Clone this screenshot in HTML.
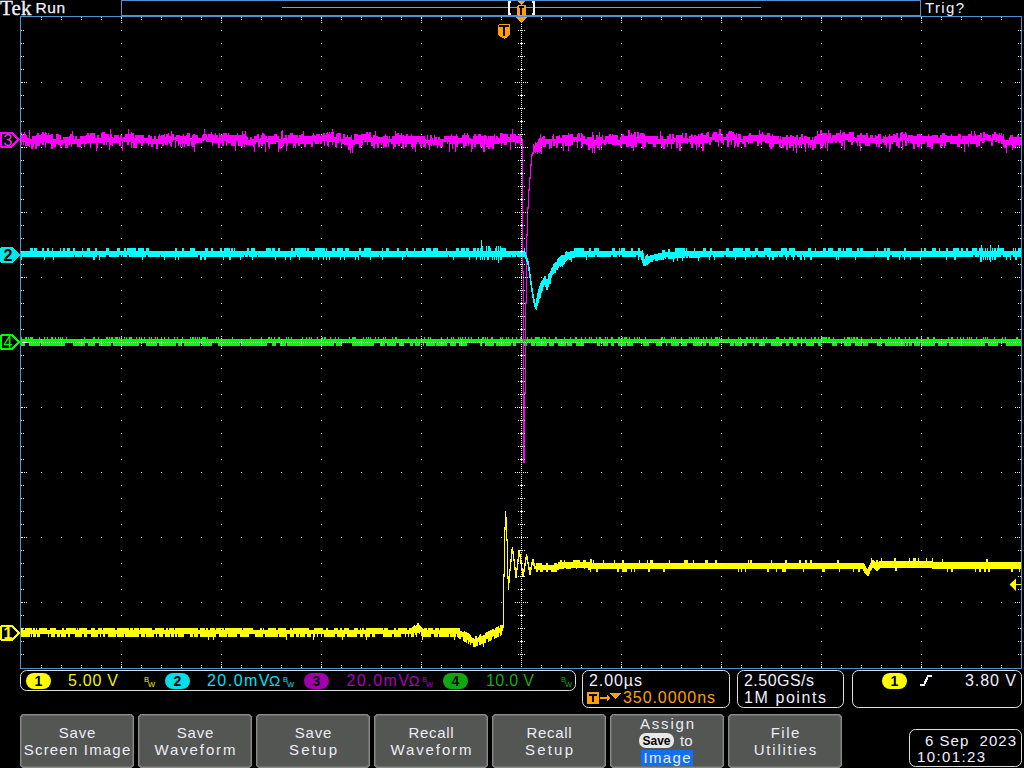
<!DOCTYPE html>
<html><head><meta charset="utf-8"><title>Tek scope</title>
<style>html,body{margin:0;padding:0;background:#000;width:1024px;height:768px;overflow:hidden}svg{display:block}</style>
</head><body>
<svg width="1024" height="768" viewBox="0 0 1024 768" shape-rendering="crispEdges">
<rect width="1024" height="768" fill="#000"/>
<path fill="#00ff00" d="M21 337H22V339H25V337H27V339H28V337H29V339H30V337H33V339H39V337H40V339H44V337H45V339H47V337H48V339H51V337H53V339H55V337H56V339H58V337H59V339H60V337H61V339H62V337H63V339H66V337H67V339H84V337H85V339H93V337H95V339H98V337H99V339H106V337H108V339H109V337H110V339H111V337H113V339H115V337H118V339H119V337H120V339H121V337H122V339H124V337H125V339H126V337H127V339H129V337H132V339H136V337H137V339H139V337H140V339H141V337H142V339H144V337H145V339H149V337H150V339H151V337H152V339H155V337H156V339H157V337H158V339H161V337H162V339H164V337H165V339H168V337H169V339H174V337H175V339H177V337H178V339H182V337H183V339H190V337H191V339H192V337H194V339H195V337H196V339H197V337H198V339H199V337H200V339H202V337H206V339H207V337H208V339H216V337H217V339H218V337H219V339H232V337H233V339H250V337H251V339H261V337H262V339H268V337H270V339H271V337H272V339H274V337H275V339H278V337H280V339H286V337H287V339H288V337H289V339H291V337H292V339H302V337H303V339H306V337H307V339H309V337H310V339H311V337H312V339H317V337H318V339H322V337H323V339H324V337H326V339H330V337H331V339H335V337H336V339H338V337H339V339H349V337H350V339H352V337H356V339H363V337H364V339H366V337H367V339H368V337H369V339H370V337H371V339H375V337H376V339H378V337H379V339H383V337H384V339H385V337H386V339H392V337H393V339H395V337H397V339H408V337H409V339H416V337H417V339H424V337H425V339H428V337H429V339H430V337H431V339H441V337H442V339H447V337H448V339H451V337H452V339H453V337H454V339H458V337H459V339H460V337H461V339H462V337H463V339H465V337H466V339H468V337H469V339H471V337H472V339H478V337H479V339H482V337H484V339H485V337H486V339H487V337H488V339H491V337H493V339H500V337H501V339H502V337H503V339H506V337H507V339H508V337H509V339H512V337H513V339H516V337H517V339H520V337H522V339H523V337H524V339H527V337H528V339H531V337H532V339H535V337H540V339H542V337H543V339H544V337H546V339H549V337H550V339H555V337H557V339H564V337H565V339H570V337H571V339H575V337H577V339H581V337H582V339H585V337H586V339H589V337H590V339H591V337H592V339H596V337H597V339H599V337H601V339H605V337H606V339H607V337H608V339H611V337H613V339H618V337H620V339H622V337H623V339H624V337H627V339H629V337H630V339H634V337H635V339H637V337H638V339H639V337H640V339H645V337H646V339H661V337H663V339H664V337H665V339H671V337H672V339H673V337H674V339H675V337H676V339H681V337H682V339H689V337H690V339H691V337H692V339H694V337H695V339H696V337H697V339H698V337H699V339H703V337H704V339H706V337H707V339H711V337H712V339H715V337H718V339H719V337H720V339H728V337H729V339H738V337H739V339H740V337H741V339H746V337H748V339H750V337H751V339H753V337H754V339H756V337H757V339H763V337H764V339H766V337H767V339H776V337H779V339H784V337H785V339H789V337H791V339H792V337H793V339H797V337H799V339H801V337H802V339H805V337H806V339H811V337H812V339H814V337H816V339H818V337H819V339H821V337H827V339H828V337H830V339H833V337H834V339H844V337H845V339H847V337H850V339H851V337H852V339H853V337H855V339H856V337H858V339H861V337H862V339H871V337H872V339H880V337H881V339H888V337H889V339H890V337H891V339H895V337H896V339H898V337H900V339H905V337H906V339H909V337H910V339H916V337H918V339H921V337H922V339H927V337H929V339H933V337H935V339H948V337H949V339H951V337H953V339H957V337H958V339H960V337H961V339H963V337H964V339H967V337H968V339H969V337H970V339H971V337H972V339H976V337H977V339H983V337H984V339H985V337H986V339H987V337H988V339H994V337H995V339H1002V337H1003V339H1005V337H1006V339H1016V337H1018V339H1021V346H1006V343H998V346H988V343H985V346H949V343H947V346H938V343H935V346H921V343H920V346H914V343H912V346H909V343H908V346H906V343H905V346H885V343H881V346H877V343H868V346H863V343H862V346H855V343H851V346H844V343H837V346H832V343H821V346H818V343H814V346H806V343H802V346H801V343H797V346H793V343H789V346H786V343H782V346H771V343H765V346H759V343H755V346H753V343H747V346H744V343H742V346H735V343H734V346H730V343H719V346H709V343H706V346H703V343H702V346H693V343H687V346H682V343H679V346H671V343H667V346H666V343H662V346H656V343H649V346H643V343H633V346H627V343H626V346H618V343H614V346H611V343H608V346H603V343H600V346H597V343H584V346H576V343H572V346H567V343H566V346H558V343H554V346H549V343H547V346H536V343H535V346H531V343H527V346H524V343H516V346H513V343H511V346H496V343H494V346H485V343H482V346H480V343H467V346H459V343H456V346H450V343H447V346H436V343H435V346H426V343H424V346H423V343H420V346H415V343H413V346H410V343H404V346H399V343H396V346H387V343H385V346H380V343H374V346H352V343H342V346H336V343H334V346H287V343H286V346H280V343H276V346H272V343H267V346H241V343H240V346H218V343H212V346H202V343H200V346H184V343H182V346H178V343H176V346H159V343H157V346H146V343H139V346H113V343H111V346H99V343H95V346H88V343H85V346H73V343H65V346H41V343H40V346H29V343H25V346H21z"/>
<path fill="#ff00ff" d="M21 132H22V134H24V132H25V134H26V135H27V138H29V130H30V139H32V136H36V135H37V133H39V135H41V134H42V132H44V134H45V132H46V133H47V135H48V133H49V135H51V134H53V139H56V134H59V135H61V140H63V137H69V136H70V134H72V131H73V136H74V139H75V136H77V139H80V136H86V135H87V133H89V135H90V133H95V138H97V135H99V138H101V133H102V132H105V134H109V137H110V129H111V134H112V137H113V138H114V135H119V138H120V135H122V138H123V137H125V134H128V129H129V134H131V132H132V133H134V138H135V135H144V138H148V135H150V136H152V139H154V136H156V139H158V136H159V134H160V136H161V135H164V134H165V137H166V134H168V133H169V136H171V131H172V134H174V137H176V135H180V136H183V134H184V136H186V135H187V133H190V138H192V135H193V134H195V135H198V138H202V135H203V134H204V129H205V134H207V137H208V134H211V132H212V134H213V135H215V133H216V135H218V138H219V133H220V135H223V133H227V135H228V133H229V135H237V133H238V135H242V131H243V134H245V131H246V136H247V137H248V140H250V137H252V139H254V136H257V134H259V139H260V138H261V135H262V133H264V134H265V136H267V139H268V136H274V134H277V136H279V139H281V131H282V130H283V138H285V135H287V138H288V135H290V133H293V135H298V138H299V135H301V134H303V131H304V136H312V135H313V133H314V135H315V136H316V134H320V136H321V135H323V133H325V135H326V133H327V132H328V134H329V132H330V134H331V132H332V129H333V132H334V137H336V134H337V133H341V139H343V134H345V137H347V135H348V137H351V135H352V140H354V134H358V135H361V134H366V132H368V134H369V132H371V137H372V138H373V135H375V131H376V136H378V137H383V136H385V134H386V136H388V139H389V136H390V139H392V136H395V131H396V134H397V133H399V135H401V133H402V135H404V136H406V134H408V136H411V134H412V136H425V139H426V140H427V135H428V140H430V135H432V138H433V140H434V135H435V137H437V140H438V137H440V139H444V136H451V134H452V136H456V134H457V136H458V138H462V135H464V133H465V135H467V133H468V135H469V138H471V139H473V136H474V134H476V136H478V134H481V136H484V135H486V136H487V139H488V136H494V134H495V139H496V136H498V138H500V133H503V134H508V137H510V134H512V129H513V134H516V136H519V134H521V139H523V271H524V392H525V302H526V234H527V207H528V189H529V177H530V164H531V154H532V152H533V144H534V145H535V142H536V143H537V142H538V139H539V138H540V134H541V138H542V137H543V136H545V139H552V136H553V134H554V139H556V136H559V135H560V138H562V135H568V133H569V135H570V134H573V137H577V134H578V133H580V138H581V133H582V134H583V136H585V139H587V137H592V132H593V135H594V140H596V135H598V137H599V132H600V137H602V135H603V140H605V136H609V134H611V136H612V134H613V135H618V140H620V137H621V134H624V136H628V130H630V135H631V133H632V135H633V134H634V132H636V137H637V132H639V135H640V133H644V134H645V136H658V139H660V131H661V136H663V139H667V136H669V134H671V139H672V134H674V138H676V135H682V133H683V138H685V133H687V138H688V139H689V136H691V134H692V135H693V137H694V135H696V136H698V134H699V136H700V134H701V133H703V135H706V133H707V132H709V137H712V134H713V132H717V134H719V129H721V135H722V134H723V137H726V134H728V132H729V131H732V132H734V134H735V135H736V133H737V138H738V134H741V139H743V136H748V135H749V133H751V135H759V130H760V134H762V132H763V134H764V135H767V133H770V136H772V134H773V136H779V139H780V136H781V140H782V137H786V135H788V137H790V135H792V136H794V137H796V135H798V140H799V137H801V134H803V139H804V136H807V137H810V140H812V137H813V140H814V137H815V136H817V131H818V134H820V130H822V133H827V135H828V130H829V133H831V138H832V135H836V133H840V130H841V135H842V133H843V132H845V134H849V132H854V137H855V138H857V135H860V133H862V135H866V133H868V138H870V135H873V138H875V135H876V136H878V134H881V139H883V136H884V137H885V135H886V137H888V136H889V134H890V136H893V134H895V135H896V133H898V138H900V133H901V132H903V134H905V132H906V133H907V138H908V135H913V136H917V134H922V136H928V134H929V136H932V135H938V138H940V135H942V133H945V135H947V136H951V134H952V136H958V134H961V139H962V136H968V134H971V131H972V136H974V131H975V134H976V136H977V135H980V133H982V138H983V132H985V134H988V135H991V138H992V134H994V132H996V134H998V135H999V133H1000V135H1001V133H1002V136H1003V134H1004V139H1005V140H1009V137H1010V135H1013V137H1017V135H1019V137H1021V145H1020V148H1019V145H1016V148H1013V150H1012V145H1007V153H1006V148H1004V147H1003V144H1001V141H1000V143H998V141H997V142H995V140H993V146H991V141H987V140H985V142H984V143H982V141H980V146H978V147H976V144H970V142H969V147H968V144H965V152H964V144H960V147H957V144H950V142H946V146H945V148H944V143H943V146H942V148H940V143H933V149H931V147H927V142H925V144H922V149H921V144H920V147H917V144H915V149H913V144H912V143H910V141H909V143H908V141H907V146H905V140H903V150H902V141H900V148H898V146H896V142H893V144H891V149H890V152H889V143H887V148H886V145H884V143H883V142H882V144H880V147H878V144H877V147H876V144H875V143H870V146H865V143H861V151H860V146H859V141H858V146H857V143H856V141H854V142H853V145H851V142H848V140H845V150H844V141H843V146H841V143H839V141H837V143H835V141H833V143H828V151H827V141H826V148H825V143H824V146H823V148H821V149H820V144H816V148H814V150H812V145H811V148H810V145H809V148H808V143H806V152H805V147H804V144H802V148H801V145H800V148H799V145H797V153H796V148H795V144H794V151H793V146H791V148H789V143H788V150H786V145H784V148H782V143H781V148H780V147H779V144H774V147H772V149H770V147H769V143H765V141H763V142H762V145H761V143H759V146H757V141H753V143H749V144H748V142H746V147H744V144H742V142H740V144H739V147H737V143H736V146H735V148H734V140H732V145H731V141H730V142H729V147H727V140H724V145H723V143H721V141H720V140H719V147H718V142H715V140H712V142H711V145H709V142H708V143H704V151H702V144H700V147H698V144H697V150H696V145H695V143H693V148H691V144H690V142H688V144H687V143H681V151H679V143H678V148H676V141H675V142H674V144H672V149H671V144H668V147H667V144H665V149H663V147H661V144H656V147H653V144H648V142H646V147H644V149H643V148H642V143H638V142H637V147H635V145H634V151H633V148H631V146H629V147H626V144H622V148H620V145H612V144H608V142H607V144H606V145H604V143H602V150H601V145H600V150H599V148H597V145H595V153H594V148H593V153H592V148H590V150H588V145H586V144H583V147H581V141H578V148H577V142H576V140H575V142H573V145H571V146H569V151H568V146H565V143H564V151H563V146H562V143H558V148H556V143H555V146H553V141H552V148H550V149H549V144H546V147H543V145H542V154H541V152H540V153H539V152H538V154H537V152H536V153H535V152H534V154H533V156H532V166H531V179H530V191H529V209H528V236H527V304H526V394H525V463H523V273H522V142H521V146H520V143H516V146H515V142H511V150H510V142H507V145H504V143H502V146H501V143H499V144H494V149H492V147H490V149H488V147H486V144H485V152H483V147H480V144H476V147H474V144H473V149H472V152H471V144H470V143H469V146H468V143H467V146H465V148H463V143H459V144H458V147H456V152H455V144H453V149H452V144H450V152H449V142H448V144H447V142H443V147H441V148H440V145H438V148H437V145H434V146H433V144H432V146H431V145H430V150H429V145H428V143H426V148H425V147H423V144H422V147H420V144H419V142H417V144H416V152H415V147H413V149H412V147H411V144H407V147H405V144H404V149H403V148H402V143H400V146H398V144H396V147H394V149H393V144H391V142H389V147H388V144H387V147H384V148H383V143H382V145H381V143H379V148H377V144H375V149H374V148H373V146H371V142H368V145H367V142H364V140H363V145H362V146H361V148H359V144H355V145H353V153H352V148H351V153H350V150H348V145H344V144H342V147H341V142H340V141H339V143H337V148H336V147H335V142H333V145H332V142H329V147H328V146H327V141H325V146H324V141H322V144H320V142H319V144H315V142H314V141H313V147H311V144H306V147H304V144H300V146H298V143H296V148H295V146H294V148H293V143H288V146H287V151H286V143H284V146H283V147H281V149H279V152H278V142H276V144H270V149H269V147H268V142H266V152H265V144H263V146H261V144H260V147H258V142H256V144H255V152H254V147H253V145H246V144H245V147H244V144H243V147H241V146H238V141H236V151H235V146H231V143H227V146H226V141H224V146H222V143H220V148H218V143H213V146H212V142H206V140H204V141H202V143H196V144H195V152H194V147H192V146H191V141H190V146H187V144H185V147H184V144H183V147H182V144H181V147H180V144H179V146H178V141H176V148H175V140H173V142H172V147H171V146H170V144H169V142H168V145H165V143H164V146H162V144H158V149H156V144H153V147H151V144H149V146H148V143H146V141H145V143H143V146H141V143H137V148H133V143H132V148H131V142H129V145H127V142H124V141H123V151H122V141H121V146H119V143H113V146H112V145H110V150H109V142H107V145H106V142H105V145H103V143H98V148H97V151H96V143H91V148H90V143H87V144H85V147H84V144H81V147H77V144H72V147H71V144H70V145H68V148H65V143H63V145H61V148H60V145H58V144H56V147H53V149H51V144H50V143H46V148H45V142H44V145H42V143H40V146H37V149H35V144H34V147H33V149H31V144H30V147H29V146H25V142H24V145H23V142H22V145H21z"/>
<path fill="#00ffff" d="M21 251H30V248H33V251H34V248H37V251H42V248H44V251H47V248H49V251H52V248H53V251H60V248H61V251H63V248H65V251H67V248H70V251H73V248H75V251H82V248H83V251H87V248H90V251H95V248H97V251H106V248H109V251H117V248H120V251H124V248H126V251H127V248H136V251H138V248H144V251H146V248H149V251H175V248H177V251H182V248H184V251H190V248H195V251H205V248H208V251H211V248H213V251H220V248H222V251H224V248H230V251H231V248H233V251H234V248H235V251H247V248H249V251H251V248H255V251H266V248H271V251H272V248H275V251H278V248H280V251H291V248H293V251H295V248H306V251H307V248H309V251H315V248H325V251H326V248H327V251H332V248H335V251H337V248H343V251H345V248H349V251H359V248H361V251H364V248H371V251H382V248H383V251H386V248H389V251H397V248H399V251H406V248H408V251H414V248H415V251H422V248H424V251H426V248H431V251H433V248H438V251H446V248H447V251H456V248H459V251H461V248H465V251H466V248H469V251H473V248H476V251H477V248H479V251H480V248H481V240H482V246H483V251H486V246H487V251H488V246H490V248H491V251H495V248H496V246H497V251H498V246H499V251H500V246H501V248H506V251H524V248H525V252H526V255H527V258H528V261H529V267H530V274H531V281H532V288H533V294H534V299H535V303H536V298H537V293H538V289H539V286H540V283H541V281H542V280H543V278H544V276H546V279H548V274H549V273H550V271H551V268H552V267H553V264H554V263H555V262H557V259H558V258H559V257H560V256H561V255H565V252H566V251H567V252H570V251H574V248H584V251H589V248H591V251H594V248H599V251H612V248H615V251H619V248H620V251H621V248H625V251H631V248H633V251H638V248H640V251H642V250H643V253H644V259H645V256H646V255H647V254H648V256H650V255H654V254H658V253H662V250H665V252H668V249H670V252H675V248H685V251H686V248H687V251H694V248H695V251H703V248H706V251H710V248H712V251H726V248H729V251H733V248H743V251H745V248H750V251H755V248H758V251H764V248H771V251H781V248H787V251H789V248H795V251H808V248H811V251H815V248H816V251H823V248H826V251H828V248H833V251H838V248H841V251H843V248H844V251H846V248H852V251H857V248H859V251H860V248H863V251H877V248H878V251H884V248H886V251H887V248H890V251H904V248H906V251H921V248H922V251H924V248H926V251H932V248H936V251H939V248H940V251H946V248H948V251H953V248H959V251H961V248H963V251H966V248H968V251H972V248H977V251H979V248H981V245H982V248H983V251H985V248H986V251H987V248H988V251H990V245H991V251H992V248H993V251H994V248H996V251H997V248H998V245H999V248H1004V251H1013V248H1014V251H1015V248H1016V251H1018V248H1021V257H1017V260H1015V257H1013V255H1011V260H1010V257H1007V260H1006V257H1003V255H1001V257H996V260H994V257H993V260H992V257H991V262H990V260H989V257H988V260H987V257H986V260H985V257H984V260H983V257H982V262H980V255H979V257H975V255H973V257H956V260H954V257H947V260H946V257H921V260H920V257H911V260H910V257H905V260H904V257H902V255H901V257H900V260H899V257H892V255H890V257H889V260H887V257H875V255H874V257H856V260H855V257H839V260H838V257H837V260H836V257H812V260H810V257H805V260H804V257H803V255H802V260H800V257H797V255H795V257H794V260H793V257H791V255H789V257H787V260H786V257H785V255H783V257H779V255H778V257H774V260H772V257H770V260H769V257H767V255H765V257H758V255H756V257H752V255H751V257H746V260H745V257H736V260H735V257H726V255H724V257H715V260H714V257H713V255H711V257H710V260H709V257H700V258H699V261H698V258H689V256H688V258H686V256H685V258H683V261H682V258H678V261H677V258H675V259H674V262H673V259H668V257H666V259H665V258H664V260H658V261H655V259H654V260H653V262H650V263H649V264H648V265H646V266H643V263H642V260H641V257H639V260H638V255H636V257H622V255H620V257H619V255H617V257H613V255H611V257H597V255H595V257H588V255H587V260H586V257H575V258H572V262H571V260H569V259H568V260H567V261H566V262H565V264H564V265H563V267H562V266H561V267H560V266H559V268H558V270H556V273H554V274H553V275H552V278H551V284H549V287H548V290H546V287H545V285H544V287H543V291H542V293H541V298H540V299H539V303H538V306H537V310H536V309H535V307H534V303H533V298H532V292H531V285H530V278H529V271H528V265H527V262H526V259H525V257H517V255H516V257H512V255H511V257H502V260H500V257H499V263H498V257H497V260H496V257H495V260H494V257H493V260H492V257H489V260H487V257H485V260H484V257H483V260H482V257H481V260H480V257H477V260H476V257H470V260H469V257H454V260H453V257H449V255H448V257H407V255H406V257H403V260H402V257H383V260H382V257H380V255H379V257H371V260H370V257H361V255H359V260H358V257H356V260H355V257H345V260H344V257H341V260H340V257H330V260H329V257H327V260H326V257H324V260H323V257H319V260H318V257H313V260H312V257H300V260H299V257H297V255H296V257H291V260H290V257H286V260H285V257H276V260H275V257H258V255H257V257H253V260H252V257H249V255H248V257H245V255H244V257H241V260H240V257H231V260H229V257H224V260H223V257H206V260H204V257H202V260H200V255H198V257H179V260H178V257H176V260H175V257H165V260H164V257H161V255H160V257H148V255H146V257H143V260H142V257H129V255H127V257H123V255H122V257H121V255H119V257H109V255H106V257H100V260H99V255H97V257H95V260H93V257H83V255H82V257H75V255H74V257H54V260H53V257H45V260H44V257H22V260H21z"/>
<path fill="#ffff00" d="M21 628H23V630H25V628H32V630H33V628H35V630H36V628H37V630H39V628H47V630H50V628H56V630H62V628H64V630H66V628H76V630H77V628H78V630H79V628H87V630H91V628H95V630H98V628H102V630H103V628H115V630H117V628H129V630H130V628H133V630H134V628H139V630H140V628H152V630H155V628H164V630H166V628H168V630H169V628H174V630H175V628H198V630H200V628H205V630H206V628H208V630H210V628H215V630H216V628H221V630H222V628H224V630H225V628H242V630H243V628H253V630H260V628H262V630H263V628H264V630H268V628H276V630H278V628H286V630H290V628H292V630H293V628H309V630H314V628H323V630H326V628H328V630H334V628H338V630H340V628H342V630H344V628H349V630H354V628H358V630H360V628H361V630H362V628H364V630H366V628H383V630H384V628H388V630H394V628H396V630H398V628H407V630H409V628H412V627H413V626H414V625H415V626H416V625H417V623H419V625H420V626H421V627H422V628H423V629H424V628H427V630H428V628H433V630H435V628H439V630H440V628H460V631H462V632H464V631H465V632H467V633H469V634H470V635H471V637H472V638H474V639H475V636H477V638H478V637H479V635H480V634H481V636H483V635H485V633H486V632H488V631H490V630H492V629H494V630H495V628H496V627H498V626H499V628H500V625H503V574H504V527H505V511H506V517H507V539H508V576H509V569H510V559H511V549H512V547H513V551H514V559H515V567H516V568H517V559H518V551H519V550H520V554H521V561H522V568H523V569H524V564H525V557H526V554H527V556H528V562H529V567H531V562H532V559H534V563H535V566H536V563H542V565H546V563H548V565H554V563H557V564H558V562H560V560H562V562H564V560H565V562H573V560H580V562H583V560H586V562H590V559H592V563H593V560H594V563H603V560H604V563H614V560H615V563H622V560H624V563H639V560H640V563H647V560H648V563H650V560H653V563H669V560H670V563H684V560H688V563H693V560H694V563H705V560H708V563H715V560H717V563H748V560H749V563H750V560H752V563H771V560H772V563H785V560H787V563H799V560H801V563H805V560H807V563H810V560H812V563H837V560H839V563H864V564H865V566H866V568H867V569H868V567H869V565H870V563H871V558H872V560H874V561H875V562H876V560H878V562H879V561H881V558H882V561H894V558H896V561H909V558H910V561H913V558H916V561H918V558H919V561H926V558H927V561H932V558H933V562H942V559H943V562H986V559H988V562H1021V569H1020V572H1019V569H1013V572H1011V569H990V572H988V569H986V572H984V569H981V572H979V569H976V572H975V569H953V572H951V569H948V572H947V569H932V568H897V571H895V568H880V569H879V570H878V571H876V570H875V569H874V568H872V570H871V571H870V574H869V576H867V575H866V574H865V573H864V571H863V569H860V572H858V569H854V572H853V569H840V572H839V569H825V572H822V569H804V572H803V569H786V572H782V569H777V572H776V569H769V572H767V569H746V572H745V569H742V572H741V569H739V572H738V569H665V572H663V569H650V572H648V569H635V572H634V569H632V572H631V569H627V572H622V569H619V572H617V569H598V572H596V569H591V572H590V570H588V568H585V569H584V568H577V569H576V568H571V569H566V568H564V569H559V570H557V572H551V570H548V572H546V570H543V572H540V570H538V572H536V569H534V566H533V565H532V570H531V575H529V570H528V564H527V560H526V566H525V572H524V577H522V570H521V563H520V557H519V562H518V570H517V578H515V570H514V561H513V554H512V562H511V571H510V583H509V590H508V579H507V541H506V530H505V577H504V628H503V631H502V635H501V636H500V633H499V637H497V638H495V639H494V636H493V637H492V640H491V641H489V642H488V639H486V643H484V647H483V644H481V645H479V642H478V646H476V647H473V643H471V645H470V642H469V644H468V640H467V643H466V642H464V641H463V637H461V639H459V638H458V637H457V634H456V637H455V640H454V637H450V634H449V637H439V634H438V637H434V634H431V637H423V640H422V636H421V632H420V634H419V633H417V637H416V635H415V633H414V637H411V634H409V637H408V634H406V637H405V634H401V637H394V634H392V637H383V634H375V637H372V634H370V637H367V640H366V637H365V634H363V637H360V634H357V637H347V634H345V637H343V640H342V637H337V634H335V637H324V634H322V637H321V634H318V637H317V634H315V637H314V640H313V634H311V637H307V634H305V637H300V634H299V637H296V634H294V637H290V634H287V640H286V637H279V634H278V637H265V634H263V637H255V634H249V637H240V634H237V637H228V634H227V637H219V634H216V637H214V640H213V637H209V640H208V637H200V634H198V637H194V634H193V637H190V634H184V637H178V634H177V637H175V634H174V637H171V634H170V637H165V634H163V637H159V634H157V637H156V634H154V637H146V634H145V637H141V634H139V637H125V634H124V637H117V634H116V637H108V634H105V637H103V634H101V637H100V634H98V637H91V634H87V637H84V634H82V637H75V634H70V637H68V634H66V637H61V634H60V637H57V634H55V637H51V634H49V637H48V634H40V637H37V634H36V637H33V634H32V637H31V634H30V637H21z"/>
<path fill="#f4f4f4" d="M41 17h1v1H41zM61 17h1v1H61zM81 17h1v1H81zM101 17h1v1H101zM121 17h1v1H121zM141 17h1v1H141zM161 17h1v1H161zM181 17h1v1H181zM201 17h1v1H201zM221 17h1v1H221zM241 17h1v1H241zM261 17h1v1H261zM281 17h1v1H281zM301 17h1v1H301zM321 17h1v1H321zM341 17h1v1H341zM361 17h1v1H361zM381 17h1v1H381zM401 17h1v1H401zM421 17h1v1H421zM441 17h1v1H441zM461 17h1v1H461zM481 17h1v1H481zM501 17h1v1H501zM541 17h1v1H541zM561 17h1v1H561zM581 17h1v1H581zM601 17h1v1H601zM621 17h1v1H621zM641 17h1v1H641zM661 17h1v1H661zM681 17h1v1H681zM701 17h1v1H701zM721 17h1v1H721zM741 17h1v1H741zM761 17h1v1H761zM781 17h1v1H781zM801 17h1v1H801zM821 17h1v1H821zM841 17h1v1H841zM861 17h1v1H861zM881 17h1v1H881zM901 17h1v1H901zM921 17h1v1H921zM941 17h1v1H941zM961 17h1v1H961zM981 17h1v1H981zM1001 17h1v1H1001zM121 18h1v1H121zM221 18h1v1H221zM321 18h1v1H321zM421 18h1v1H421zM521 18h1v1H521zM621 18h1v1H621zM721 18h1v1H721zM821 18h1v1H821zM921 18h1v1H921zM41 19h1v1H41zM61 19h1v1H61zM81 19h1v1H81zM101 19h1v1H101zM141 19h1v1H141zM161 19h1v1H161zM181 19h1v1H181zM201 19h1v1H201zM241 19h1v1H241zM261 19h1v1H261zM281 19h1v1H281zM301 19h1v1H301zM341 19h1v1H341zM361 19h1v1H361zM381 19h1v1H381zM401 19h1v1H401zM441 19h1v1H441zM461 19h1v1H461zM481 19h1v1H481zM501 19h1v1H501zM541 19h1v1H541zM561 19h1v1H561zM581 19h1v1H581zM601 19h1v1H601zM641 19h1v1H641zM661 19h1v1H661zM681 19h1v1H681zM701 19h1v1H701zM741 19h1v1H741zM761 19h1v1H761zM781 19h1v1H781zM801 19h1v1H801zM841 19h1v1H841zM861 19h1v1H861zM881 19h1v1H881zM901 19h1v1H901zM941 19h1v1H941zM961 19h1v1H961zM981 19h1v1H981zM1001 19h1v1H1001zM121 20h1v1H121zM221 20h1v1H221zM321 20h1v1H321zM421 20h1v1H421zM521 20h1v1H521zM621 20h1v1H621zM721 20h1v1H721zM821 20h1v1H821zM921 20h1v1H921zM121 22h1v1H121zM221 22h1v1H221zM321 22h1v1H321zM421 22h1v1H421zM521 22h1v1H521zM621 22h1v1H621zM721 22h1v1H721zM821 22h1v1H821zM921 22h1v1H921zM521 24h1v1H521zM521 26h1v1H521zM521 28h1v1H521zM21 30h1v1H21zM23 30h1v1H23zM121 30h1v1H121zM221 30h1v1H221zM321 30h1v1H321zM421 30h1v1H421zM518 30h1v1H518zM520 30h3v1H520zM524 30h1v1H524zM621 30h1v1H621zM721 30h1v1H721zM821 30h1v1H821zM921 30h1v1H921zM1018 30h1v1H1018zM1020 30h1v1H1020zM521 32h1v1H521zM521 34h1v1H521zM521 36h1v1H521zM521 38h1v1H521zM521 40h1v1H521zM521 42h1v1H521zM21 43h1v1H21zM23 43h1v1H23zM121 43h1v1H121zM221 43h1v1H221zM321 43h1v1H321zM421 43h1v1H421zM518 43h1v1H518zM520 43h3v1H520zM524 43h1v1H524zM621 43h1v1H621zM721 43h1v1H721zM821 43h1v1H821zM921 43h1v1H921zM1018 43h1v1H1018zM1020 43h1v1H1020zM521 44h1v1H521zM521 46h1v1H521zM521 48h1v1H521zM521 50h1v1H521zM521 52h1v1H521zM521 54h1v1H521zM21 56h1v1H21zM23 56h1v1H23zM121 56h1v1H121zM221 56h1v1H221zM321 56h1v1H321zM421 56h1v1H421zM518 56h1v1H518zM520 56h3v1H520zM524 56h1v1H524zM621 56h1v1H621zM721 56h1v1H721zM821 56h1v1H821zM921 56h1v1H921zM1018 56h1v1H1018zM1020 56h1v1H1020zM521 58h1v1H521zM521 60h1v1H521zM521 62h1v1H521zM521 64h1v1H521zM521 66h1v1H521zM521 68h1v1H521zM21 69h1v1H21zM23 69h1v1H23zM121 69h1v1H121zM221 69h1v1H221zM321 69h1v1H321zM421 69h1v1H421zM518 69h1v1H518zM520 69h3v1H520zM524 69h1v1H524zM621 69h1v1H621zM721 69h1v1H721zM821 69h1v1H821zM921 69h1v1H921zM1018 69h1v1H1018zM1020 69h1v1H1020zM521 70h1v1H521zM521 72h1v1H521zM521 74h1v1H521zM521 76h1v1H521zM521 78h1v1H521zM521 80h1v1H521zM21 82h2v1H21zM24 82h1v1H24zM26 82h1v1H26zM41 82h1v1H41zM61 82h1v1H61zM81 82h1v1H81zM101 82h1v1H101zM121 82h1v1H121zM141 82h1v1H141zM161 82h1v1H161zM181 82h1v1H181zM201 82h1v1H201zM221 82h1v1H221zM241 82h1v1H241zM261 82h1v1H261zM281 82h1v1H281zM301 82h1v1H301zM321 82h1v1H321zM341 82h1v1H341zM361 82h1v1H361zM381 82h1v1H381zM401 82h1v1H401zM421 82h1v1H421zM441 82h1v1H441zM461 82h1v1H461zM481 82h1v1H481zM501 82h1v1H501zM515 82h1v1H515zM517 82h1v1H517zM519 82h1v1H519zM521 82h1v1H521zM523 82h1v1H523zM525 82h1v1H525zM527 82h1v1H527zM541 82h1v1H541zM561 82h1v1H561zM581 82h1v1H581zM601 82h1v1H601zM621 82h1v1H621zM641 82h1v1H641zM661 82h1v1H661zM681 82h1v1H681zM701 82h1v1H701zM721 82h1v1H721zM741 82h1v1H741zM761 82h1v1H761zM781 82h1v1H781zM801 82h1v1H801zM821 82h1v1H821zM841 82h1v1H841zM861 82h1v1H861zM881 82h1v1H881zM901 82h1v1H901zM921 82h1v1H921zM941 82h1v1H941zM961 82h1v1H961zM981 82h1v1H981zM1001 82h1v1H1001zM1015 82h1v1H1015zM1017 82h1v1H1017zM1019 82h1v1H1019zM1021 82h1v1H1021zM521 84h1v1H521zM521 86h1v1H521zM521 88h1v1H521zM521 90h1v1H521zM521 92h1v1H521zM521 94h1v1H521zM21 95h1v1H21zM23 95h1v1H23zM121 95h1v1H121zM221 95h1v1H221zM321 95h1v1H321zM421 95h1v1H421zM518 95h1v1H518zM520 95h3v1H520zM524 95h1v1H524zM621 95h1v1H621zM721 95h1v1H721zM821 95h1v1H821zM921 95h1v1H921zM1018 95h1v1H1018zM1020 95h1v1H1020zM521 96h1v1H521zM521 98h1v1H521zM521 100h1v1H521zM521 102h1v1H521zM521 104h1v1H521zM521 106h1v1H521zM21 108h1v1H21zM23 108h1v1H23zM121 108h1v1H121zM221 108h1v1H221zM321 108h1v1H321zM421 108h1v1H421zM518 108h1v1H518zM520 108h3v1H520zM524 108h1v1H524zM621 108h1v1H621zM721 108h1v1H721zM821 108h1v1H821zM921 108h1v1H921zM1018 108h1v1H1018zM1020 108h1v1H1020zM521 110h1v1H521zM521 112h1v1H521zM521 114h1v1H521zM521 116h1v1H521zM521 118h1v1H521zM521 120h1v1H521zM21 121h1v1H21zM23 121h1v1H23zM121 121h1v1H121zM221 121h1v1H221zM321 121h1v1H321zM421 121h1v1H421zM518 121h1v1H518zM520 121h3v1H520zM524 121h1v1H524zM621 121h1v1H621zM721 121h1v1H721zM821 121h1v1H821zM921 121h1v1H921zM1018 121h1v1H1018zM1020 121h1v1H1020zM521 122h1v1H521zM521 124h1v1H521zM521 126h1v1H521zM521 128h1v1H521zM521 130h1v1H521zM521 132h1v1H521zM21 134h1v1H21zM23 134h1v1H23zM121 134h1v1H121zM221 134h1v1H221zM321 134h1v1H321zM421 134h1v1H421zM518 134h1v1H518zM520 134h3v1H520zM524 134h1v1H524zM621 134h1v1H621zM721 134h1v1H721zM821 134h1v1H821zM921 134h1v1H921zM1018 134h1v1H1018zM1020 134h1v1H1020zM521 136h1v1H521zM521 138h1v1H521zM521 140h1v1H521zM521 142h1v1H521zM521 144h1v1H521zM521 146h1v1H521zM21 147h2v1H21zM24 147h1v1H24zM26 147h1v1H26zM41 147h1v1H41zM61 147h1v1H61zM81 147h1v1H81zM101 147h1v1H101zM121 147h1v1H121zM141 147h1v1H141zM161 147h1v1H161zM181 147h1v1H181zM201 147h1v1H201zM221 147h1v1H221zM241 147h1v1H241zM261 147h1v1H261zM281 147h1v1H281zM301 147h1v1H301zM321 147h1v1H321zM341 147h1v1H341zM361 147h1v1H361zM381 147h1v1H381zM401 147h1v1H401zM421 147h1v1H421zM441 147h1v1H441zM461 147h1v1H461zM481 147h1v1H481zM501 147h1v1H501zM515 147h1v1H515zM517 147h1v1H517zM519 147h1v1H519zM521 147h1v1H521zM523 147h1v1H523zM525 147h1v1H525zM527 147h1v1H527zM541 147h1v1H541zM561 147h1v1H561zM581 147h1v1H581zM601 147h1v1H601zM621 147h1v1H621zM641 147h1v1H641zM661 147h1v1H661zM681 147h1v1H681zM701 147h1v1H701zM721 147h1v1H721zM741 147h1v1H741zM761 147h1v1H761zM781 147h1v1H781zM801 147h1v1H801zM821 147h1v1H821zM841 147h1v1H841zM861 147h1v1H861zM881 147h1v1H881zM901 147h1v1H901zM921 147h1v1H921zM941 147h1v1H941zM961 147h1v1H961zM981 147h1v1H981zM1001 147h1v1H1001zM1015 147h1v1H1015zM1017 147h1v1H1017zM1019 147h1v1H1019zM1021 147h1v1H1021zM521 148h1v1H521zM521 150h1v1H521zM521 152h1v1H521zM521 154h1v1H521zM521 156h1v1H521zM521 158h1v1H521zM21 160h1v1H21zM23 160h1v1H23zM121 160h1v1H121zM221 160h1v1H221zM321 160h1v1H321zM421 160h1v1H421zM518 160h1v1H518zM520 160h3v1H520zM524 160h1v1H524zM621 160h1v1H621zM721 160h1v1H721zM821 160h1v1H821zM921 160h1v1H921zM1018 160h1v1H1018zM1020 160h1v1H1020zM521 162h1v1H521zM521 164h1v1H521zM521 166h1v1H521zM521 168h1v1H521zM521 170h1v1H521zM521 172h1v1H521zM21 173h1v1H21zM23 173h1v1H23zM121 173h1v1H121zM221 173h1v1H221zM321 173h1v1H321zM421 173h1v1H421zM518 173h1v1H518zM520 173h3v1H520zM524 173h1v1H524zM621 173h1v1H621zM721 173h1v1H721zM821 173h1v1H821zM921 173h1v1H921zM1018 173h1v1H1018zM1020 173h1v1H1020zM521 174h1v1H521zM521 176h1v1H521zM521 178h1v1H521zM521 180h1v1H521zM521 182h1v1H521zM521 184h1v1H521zM21 186h1v1H21zM23 186h1v1H23zM121 186h1v1H121zM221 186h1v1H221zM321 186h1v1H321zM421 186h1v1H421zM518 186h1v1H518zM520 186h3v1H520zM524 186h1v1H524zM621 186h1v1H621zM721 186h1v1H721zM821 186h1v1H821zM921 186h1v1H921zM1018 186h1v1H1018zM1020 186h1v1H1020zM521 188h1v1H521zM521 190h1v1H521zM521 192h1v1H521zM521 194h1v1H521zM521 196h1v1H521zM521 198h1v1H521zM21 199h1v1H21zM23 199h1v1H23zM121 199h1v1H121zM221 199h1v1H221zM321 199h1v1H321zM421 199h1v1H421zM518 199h1v1H518zM520 199h3v1H520zM524 199h1v1H524zM621 199h1v1H621zM721 199h1v1H721zM821 199h1v1H821zM921 199h1v1H921zM1018 199h1v1H1018zM1020 199h1v1H1020zM521 200h1v1H521zM521 202h1v1H521zM521 204h1v1H521zM521 206h1v1H521zM521 208h1v1H521zM521 210h1v1H521zM21 212h2v1H21zM24 212h1v1H24zM26 212h1v1H26zM41 212h1v1H41zM61 212h1v1H61zM81 212h1v1H81zM101 212h1v1H101zM121 212h1v1H121zM141 212h1v1H141zM161 212h1v1H161zM181 212h1v1H181zM201 212h1v1H201zM221 212h1v1H221zM241 212h1v1H241zM261 212h1v1H261zM281 212h1v1H281zM301 212h1v1H301zM321 212h1v1H321zM341 212h1v1H341zM361 212h1v1H361zM381 212h1v1H381zM401 212h1v1H401zM421 212h1v1H421zM441 212h1v1H441zM461 212h1v1H461zM481 212h1v1H481zM501 212h1v1H501zM515 212h1v1H515zM517 212h1v1H517zM519 212h1v1H519zM521 212h1v1H521zM523 212h1v1H523zM525 212h1v1H525zM527 212h1v1H527zM541 212h1v1H541zM561 212h1v1H561zM581 212h1v1H581zM601 212h1v1H601zM621 212h1v1H621zM641 212h1v1H641zM661 212h1v1H661zM681 212h1v1H681zM701 212h1v1H701zM721 212h1v1H721zM741 212h1v1H741zM761 212h1v1H761zM781 212h1v1H781zM801 212h1v1H801zM821 212h1v1H821zM841 212h1v1H841zM861 212h1v1H861zM881 212h1v1H881zM901 212h1v1H901zM921 212h1v1H921zM941 212h1v1H941zM961 212h1v1H961zM981 212h1v1H981zM1001 212h1v1H1001zM1015 212h1v1H1015zM1017 212h1v1H1017zM1019 212h1v1H1019zM1021 212h1v1H1021zM521 214h1v1H521zM521 216h1v1H521zM521 218h1v1H521zM521 220h1v1H521zM521 222h1v1H521zM521 224h1v1H521zM21 225h1v1H21zM23 225h1v1H23zM121 225h1v1H121zM221 225h1v1H221zM321 225h1v1H321zM421 225h1v1H421zM518 225h1v1H518zM520 225h3v1H520zM524 225h1v1H524zM621 225h1v1H621zM721 225h1v1H721zM821 225h1v1H821zM921 225h1v1H921zM1018 225h1v1H1018zM1020 225h1v1H1020zM521 226h1v1H521zM521 228h1v1H521zM521 230h1v1H521zM521 232h1v1H521zM521 234h1v1H521zM521 236h1v1H521zM21 238h1v1H21zM23 238h1v1H23zM121 238h1v1H121zM221 238h1v1H221zM321 238h1v1H321zM421 238h1v1H421zM518 238h1v1H518zM520 238h3v1H520zM524 238h1v1H524zM621 238h1v1H621zM721 238h1v1H721zM821 238h1v1H821zM921 238h1v1H921zM1018 238h1v1H1018zM1020 238h1v1H1020zM521 240h1v1H521zM521 242h1v1H521zM521 244h1v1H521zM521 246h1v1H521zM521 248h1v1H521zM521 250h1v1H521zM21 251h1v1H21zM23 251h1v1H23zM121 251h1v1H121zM221 251h1v1H221zM321 251h1v1H321zM421 251h1v1H421zM518 251h1v1H518zM520 251h3v1H520zM524 251h1v1H524zM621 251h1v1H621zM721 251h1v1H721zM821 251h1v1H821zM921 251h1v1H921zM1018 251h1v1H1018zM1020 251h1v1H1020zM521 252h1v1H521zM521 254h1v1H521zM521 256h1v1H521zM521 258h1v1H521zM521 260h1v1H521zM521 262h1v1H521zM21 264h1v1H21zM23 264h1v1H23zM121 264h1v1H121zM221 264h1v1H221zM321 264h1v1H321zM421 264h1v1H421zM518 264h1v1H518zM520 264h3v1H520zM524 264h1v1H524zM621 264h1v1H621zM721 264h1v1H721zM821 264h1v1H821zM921 264h1v1H921zM1018 264h1v1H1018zM1020 264h1v1H1020zM521 266h1v1H521zM521 268h1v1H521zM521 270h1v1H521zM521 272h1v1H521zM521 274h1v1H521zM521 276h1v1H521zM21 277h2v1H21zM24 277h1v1H24zM26 277h1v1H26zM41 277h1v1H41zM61 277h1v1H61zM81 277h1v1H81zM101 277h1v1H101zM121 277h1v1H121zM141 277h1v1H141zM161 277h1v1H161zM181 277h1v1H181zM201 277h1v1H201zM221 277h1v1H221zM241 277h1v1H241zM261 277h1v1H261zM281 277h1v1H281zM301 277h1v1H301zM321 277h1v1H321zM341 277h1v1H341zM361 277h1v1H361zM381 277h1v1H381zM401 277h1v1H401zM421 277h1v1H421zM441 277h1v1H441zM461 277h1v1H461zM481 277h1v1H481zM501 277h1v1H501zM515 277h1v1H515zM517 277h1v1H517zM519 277h1v1H519zM521 277h1v1H521zM523 277h1v1H523zM525 277h1v1H525zM527 277h1v1H527zM541 277h1v1H541zM561 277h1v1H561zM581 277h1v1H581zM601 277h1v1H601zM621 277h1v1H621zM641 277h1v1H641zM661 277h1v1H661zM681 277h1v1H681zM701 277h1v1H701zM721 277h1v1H721zM741 277h1v1H741zM761 277h1v1H761zM781 277h1v1H781zM801 277h1v1H801zM821 277h1v1H821zM841 277h1v1H841zM861 277h1v1H861zM881 277h1v1H881zM901 277h1v1H901zM921 277h1v1H921zM941 277h1v1H941zM961 277h1v1H961zM981 277h1v1H981zM1001 277h1v1H1001zM1015 277h1v1H1015zM1017 277h1v1H1017zM1019 277h1v1H1019zM1021 277h1v1H1021zM521 278h1v1H521zM521 280h1v1H521zM521 282h1v1H521zM521 284h1v1H521zM521 286h1v1H521zM521 288h1v1H521zM21 290h1v1H21zM23 290h1v1H23zM121 290h1v1H121zM221 290h1v1H221zM321 290h1v1H321zM421 290h1v1H421zM518 290h1v1H518zM520 290h3v1H520zM524 290h1v1H524zM621 290h1v1H621zM721 290h1v1H721zM821 290h1v1H821zM921 290h1v1H921zM1018 290h1v1H1018zM1020 290h1v1H1020zM521 292h1v1H521zM521 294h1v1H521zM521 296h1v1H521zM521 298h1v1H521zM521 300h1v1H521zM521 302h1v1H521zM21 303h1v1H21zM23 303h1v1H23zM121 303h1v1H121zM221 303h1v1H221zM321 303h1v1H321zM421 303h1v1H421zM518 303h1v1H518zM520 303h3v1H520zM524 303h1v1H524zM621 303h1v1H621zM721 303h1v1H721zM821 303h1v1H821zM921 303h1v1H921zM1018 303h1v1H1018zM1020 303h1v1H1020zM521 304h1v1H521zM521 306h1v1H521zM521 308h1v1H521zM521 310h1v1H521zM521 312h1v1H521zM521 314h1v1H521zM21 316h1v1H21zM23 316h1v1H23zM121 316h1v1H121zM221 316h1v1H221zM321 316h1v1H321zM421 316h1v1H421zM518 316h1v1H518zM520 316h3v1H520zM524 316h1v1H524zM621 316h1v1H621zM721 316h1v1H721zM821 316h1v1H821zM921 316h1v1H921zM1018 316h1v1H1018zM1020 316h1v1H1020zM521 318h1v1H521zM521 320h1v1H521zM521 322h1v1H521zM521 324h1v1H521zM521 326h1v1H521zM521 328h1v1H521zM21 329h1v1H21zM23 329h1v1H23zM121 329h1v1H121zM221 329h1v1H221zM321 329h1v1H321zM421 329h1v1H421zM518 329h1v1H518zM520 329h3v1H520zM524 329h1v1H524zM621 329h1v1H621zM721 329h1v1H721zM821 329h1v1H821zM921 329h1v1H921zM1018 329h1v1H1018zM1020 329h1v1H1020zM521 330h1v1H521zM521 332h1v1H521zM521 334h1v1H521zM121 336h1v1H121zM221 336h1v1H221zM321 336h1v1H321zM421 336h1v1H421zM521 336h1v1H521zM621 336h1v1H621zM721 336h1v1H721zM821 336h1v1H821zM921 336h1v1H921zM121 338h1v1H121zM221 338h1v1H221zM321 338h1v1H321zM421 338h1v1H421zM521 338h1v1H521zM621 338h1v1H621zM721 338h1v1H721zM821 338h1v1H821zM921 338h1v1H921zM41 339h1v1H41zM61 339h1v1H61zM81 339h1v1H81zM101 339h1v1H101zM141 339h1v1H141zM161 339h1v1H161zM181 339h1v1H181zM201 339h1v1H201zM241 339h1v1H241zM261 339h1v1H261zM281 339h1v1H281zM301 339h1v1H301zM341 339h1v1H341zM361 339h1v1H361zM381 339h1v1H381zM401 339h1v1H401zM441 339h1v1H441zM461 339h1v1H461zM481 339h1v1H481zM501 339h1v1H501zM541 339h1v1H541zM561 339h1v1H561zM581 339h1v1H581zM601 339h1v1H601zM641 339h1v1H641zM661 339h1v1H661zM681 339h1v1H681zM701 339h1v1H701zM741 339h1v1H741zM761 339h1v1H761zM781 339h1v1H781zM801 339h1v1H801zM841 339h1v1H841zM861 339h1v1H861zM881 339h1v1H881zM901 339h1v1H901zM941 339h1v1H941zM961 339h1v1H961zM981 339h1v1H981zM1001 339h1v1H1001zM121 340h1v1H121zM221 340h1v1H221zM321 340h1v1H321zM421 340h1v1H421zM521 340h1v1H521zM621 340h1v1H621zM721 340h1v1H721zM821 340h1v1H821zM921 340h1v1H921zM41 341h1v1H41zM61 341h1v1H61zM81 341h1v1H81zM101 341h1v1H101zM141 341h1v1H141zM161 341h1v1H161zM181 341h1v1H181zM201 341h1v1H201zM241 341h1v1H241zM261 341h1v1H261zM281 341h1v1H281zM301 341h1v1H301zM341 341h1v1H341zM361 341h1v1H361zM381 341h1v1H381zM401 341h1v1H401zM441 341h1v1H441zM461 341h1v1H461zM481 341h1v1H481zM501 341h1v1H501zM541 341h1v1H541zM561 341h1v1H561zM581 341h1v1H581zM601 341h1v1H601zM641 341h1v1H641zM661 341h1v1H661zM681 341h1v1H681zM701 341h1v1H701zM741 341h1v1H741zM761 341h1v1H761zM781 341h1v1H781zM801 341h1v1H801zM841 341h1v1H841zM861 341h1v1H861zM881 341h1v1H881zM901 341h1v1H901zM941 341h1v1H941zM961 341h1v1H961zM981 341h1v1H981zM1001 341h1v1H1001zM22 342h6v1H22zM29 342h1v1H29zM31 342h1v1H31zM33 342h1v1H33zM35 342h1v1H35zM37 342h1v1H37zM39 342h1v1H39zM41 342h1v1H41zM43 342h1v1H43zM45 342h1v1H45zM47 342h1v1H47zM49 342h1v1H49zM51 342h1v1H51zM53 342h1v1H53zM55 342h1v1H55zM57 342h1v1H57zM59 342h1v1H59zM61 342h1v1H61zM63 342h1v1H63zM65 342h1v1H65zM67 342h1v1H67zM69 342h1v1H69zM71 342h1v1H71zM73 342h1v1H73zM75 342h1v1H75zM77 342h1v1H77zM79 342h1v1H79zM81 342h1v1H81zM83 342h1v1H83zM85 342h1v1H85zM87 342h1v1H87zM89 342h1v1H89zM91 342h1v1H91zM93 342h1v1H93zM95 342h1v1H95zM97 342h1v1H97zM99 342h1v1H99zM101 342h1v1H101zM103 342h1v1H103zM105 342h1v1H105zM107 342h1v1H107zM109 342h1v1H109zM111 342h1v1H111zM113 342h1v1H113zM115 342h1v1H115zM117 342h1v1H117zM119 342h1v1H119zM121 342h1v1H121zM123 342h1v1H123zM125 342h1v1H125zM127 342h1v1H127zM129 342h1v1H129zM131 342h1v1H131zM133 342h1v1H133zM135 342h1v1H135zM137 342h1v1H137zM139 342h1v1H139zM141 342h1v1H141zM143 342h1v1H143zM145 342h1v1H145zM147 342h1v1H147zM149 342h1v1H149zM151 342h1v1H151zM153 342h1v1H153zM155 342h1v1H155zM157 342h1v1H157zM159 342h1v1H159zM161 342h1v1H161zM163 342h1v1H163zM165 342h1v1H165zM167 342h1v1H167zM169 342h1v1H169zM171 342h1v1H171zM173 342h1v1H173zM175 342h1v1H175zM177 342h1v1H177zM179 342h1v1H179zM181 342h1v1H181zM183 342h1v1H183zM185 342h1v1H185zM187 342h1v1H187zM189 342h1v1H189zM191 342h1v1H191zM193 342h1v1H193zM195 342h1v1H195zM197 342h1v1H197zM199 342h1v1H199zM201 342h1v1H201zM203 342h1v1H203zM205 342h1v1H205zM207 342h1v1H207zM209 342h1v1H209zM211 342h1v1H211zM213 342h1v1H213zM215 342h1v1H215zM217 342h1v1H217zM219 342h1v1H219zM221 342h1v1H221zM223 342h1v1H223zM225 342h1v1H225zM227 342h1v1H227zM229 342h1v1H229zM231 342h1v1H231zM233 342h1v1H233zM235 342h1v1H235zM237 342h1v1H237zM239 342h1v1H239zM241 342h1v1H241zM243 342h1v1H243zM245 342h1v1H245zM247 342h1v1H247zM249 342h1v1H249zM251 342h1v1H251zM253 342h1v1H253zM255 342h1v1H255zM257 342h1v1H257zM259 342h1v1H259zM261 342h1v1H261zM263 342h1v1H263zM265 342h1v1H265zM267 342h1v1H267zM269 342h1v1H269zM271 342h1v1H271zM273 342h1v1H273zM275 342h1v1H275zM277 342h1v1H277zM279 342h1v1H279zM281 342h1v1H281zM283 342h1v1H283zM285 342h1v1H285zM287 342h1v1H287zM289 342h1v1H289zM291 342h1v1H291zM293 342h1v1H293zM295 342h1v1H295zM297 342h1v1H297zM299 342h1v1H299zM301 342h1v1H301zM303 342h1v1H303zM305 342h1v1H305zM307 342h1v1H307zM309 342h1v1H309zM311 342h1v1H311zM313 342h1v1H313zM315 342h1v1H315zM317 342h1v1H317zM319 342h1v1H319zM321 342h1v1H321zM323 342h1v1H323zM325 342h1v1H325zM327 342h1v1H327zM329 342h1v1H329zM331 342h1v1H331zM333 342h1v1H333zM335 342h1v1H335zM337 342h1v1H337zM339 342h1v1H339zM341 342h1v1H341zM343 342h1v1H343zM345 342h1v1H345zM347 342h1v1H347zM349 342h1v1H349zM351 342h1v1H351zM353 342h1v1H353zM355 342h1v1H355zM357 342h1v1H357zM359 342h1v1H359zM361 342h1v1H361zM363 342h1v1H363zM365 342h1v1H365zM367 342h1v1H367zM369 342h1v1H369zM371 342h1v1H371zM373 342h1v1H373zM375 342h1v1H375zM377 342h1v1H377zM379 342h1v1H379zM381 342h1v1H381zM383 342h1v1H383zM385 342h1v1H385zM387 342h1v1H387zM389 342h1v1H389zM391 342h1v1H391zM393 342h1v1H393zM395 342h1v1H395zM397 342h1v1H397zM399 342h1v1H399zM401 342h1v1H401zM403 342h1v1H403zM405 342h1v1H405zM407 342h1v1H407zM409 342h1v1H409zM411 342h1v1H411zM413 342h1v1H413zM415 342h1v1H415zM417 342h1v1H417zM419 342h1v1H419zM421 342h1v1H421zM423 342h1v1H423zM425 342h1v1H425zM427 342h1v1H427zM429 342h1v1H429zM431 342h1v1H431zM433 342h1v1H433zM435 342h1v1H435zM437 342h1v1H437zM439 342h1v1H439zM441 342h1v1H441zM443 342h1v1H443zM445 342h1v1H445zM447 342h1v1H447zM449 342h1v1H449zM451 342h1v1H451zM453 342h1v1H453zM455 342h1v1H455zM457 342h1v1H457zM459 342h1v1H459zM461 342h1v1H461zM463 342h1v1H463zM465 342h1v1H465zM467 342h1v1H467zM469 342h1v1H469zM471 342h1v1H471zM473 342h1v1H473zM475 342h1v1H475zM477 342h1v1H477zM479 342h1v1H479zM481 342h1v1H481zM483 342h1v1H483zM485 342h1v1H485zM487 342h1v1H487zM489 342h1v1H489zM491 342h1v1H491zM493 342h1v1H493zM495 342h1v1H495zM497 342h1v1H497zM499 342h1v1H499zM501 342h1v1H501zM503 342h1v1H503zM505 342h1v1H505zM507 342h1v1H507zM509 342h1v1H509zM511 342h1v1H511zM513 342h1v1H513zM515 342h1v1H515zM517 342h1v1H517zM519 342h1v1H519zM521 342h1v1H521zM523 342h1v1H523zM525 342h1v1H525zM527 342h1v1H527zM529 342h1v1H529zM531 342h1v1H531zM533 342h1v1H533zM535 342h1v1H535zM537 342h1v1H537zM539 342h1v1H539zM541 342h1v1H541zM543 342h1v1H543zM545 342h1v1H545zM547 342h1v1H547zM549 342h1v1H549zM551 342h1v1H551zM553 342h1v1H553zM555 342h1v1H555zM557 342h1v1H557zM559 342h1v1H559zM561 342h1v1H561zM563 342h1v1H563zM565 342h1v1H565zM567 342h1v1H567zM569 342h1v1H569zM571 342h1v1H571zM573 342h1v1H573zM575 342h1v1H575zM577 342h1v1H577zM579 342h1v1H579zM581 342h1v1H581zM583 342h1v1H583zM585 342h1v1H585zM587 342h1v1H587zM589 342h1v1H589zM591 342h1v1H591zM593 342h1v1H593zM595 342h1v1H595zM597 342h1v1H597zM599 342h1v1H599zM601 342h1v1H601zM603 342h1v1H603zM605 342h1v1H605zM607 342h1v1H607zM609 342h1v1H609zM611 342h1v1H611zM613 342h1v1H613zM615 342h1v1H615zM617 342h1v1H617zM619 342h1v1H619zM621 342h1v1H621zM623 342h1v1H623zM625 342h1v1H625zM627 342h1v1H627zM629 342h1v1H629zM631 342h1v1H631zM633 342h1v1H633zM635 342h1v1H635zM637 342h1v1H637zM639 342h1v1H639zM641 342h1v1H641zM643 342h1v1H643zM645 342h1v1H645zM647 342h1v1H647zM649 342h1v1H649zM651 342h1v1H651zM653 342h1v1H653zM655 342h1v1H655zM657 342h1v1H657zM659 342h1v1H659zM661 342h1v1H661zM663 342h1v1H663zM665 342h1v1H665zM667 342h1v1H667zM669 342h1v1H669zM671 342h1v1H671zM673 342h1v1H673zM675 342h1v1H675zM677 342h1v1H677zM679 342h1v1H679zM681 342h1v1H681zM683 342h1v1H683zM685 342h1v1H685zM687 342h1v1H687zM689 342h1v1H689zM691 342h1v1H691zM693 342h1v1H693zM695 342h1v1H695zM697 342h1v1H697zM699 342h1v1H699zM701 342h1v1H701zM703 342h1v1H703zM705 342h1v1H705zM707 342h1v1H707zM709 342h1v1H709zM711 342h1v1H711zM713 342h1v1H713zM715 342h1v1H715zM717 342h1v1H717zM719 342h1v1H719zM721 342h1v1H721zM723 342h1v1H723zM725 342h1v1H725zM727 342h1v1H727zM729 342h1v1H729zM731 342h1v1H731zM733 342h1v1H733zM735 342h1v1H735zM737 342h1v1H737zM739 342h1v1H739zM741 342h1v1H741zM743 342h1v1H743zM745 342h1v1H745zM747 342h1v1H747zM749 342h1v1H749zM751 342h1v1H751zM753 342h1v1H753zM755 342h1v1H755zM757 342h1v1H757zM759 342h1v1H759zM761 342h1v1H761zM763 342h1v1H763zM765 342h1v1H765zM767 342h1v1H767zM769 342h1v1H769zM771 342h1v1H771zM773 342h1v1H773zM775 342h1v1H775zM777 342h1v1H777zM779 342h1v1H779zM781 342h1v1H781zM783 342h1v1H783zM785 342h1v1H785zM787 342h1v1H787zM789 342h1v1H789zM791 342h1v1H791zM793 342h1v1H793zM795 342h1v1H795zM797 342h1v1H797zM799 342h1v1H799zM801 342h1v1H801zM803 342h1v1H803zM805 342h1v1H805zM807 342h1v1H807zM809 342h1v1H809zM811 342h1v1H811zM813 342h1v1H813zM815 342h1v1H815zM817 342h1v1H817zM819 342h1v1H819zM821 342h1v1H821zM823 342h1v1H823zM825 342h1v1H825zM827 342h1v1H827zM829 342h1v1H829zM831 342h1v1H831zM833 342h1v1H833zM835 342h1v1H835zM837 342h1v1H837zM839 342h1v1H839zM841 342h1v1H841zM843 342h1v1H843zM845 342h1v1H845zM847 342h1v1H847zM849 342h1v1H849zM851 342h1v1H851zM853 342h1v1H853zM855 342h1v1H855zM857 342h1v1H857zM859 342h1v1H859zM861 342h1v1H861zM863 342h1v1H863zM865 342h1v1H865zM867 342h1v1H867zM869 342h1v1H869zM871 342h1v1H871zM873 342h1v1H873zM875 342h1v1H875zM877 342h1v1H877zM879 342h1v1H879zM881 342h1v1H881zM883 342h1v1H883zM885 342h1v1H885zM887 342h1v1H887zM889 342h1v1H889zM891 342h1v1H891zM893 342h1v1H893zM895 342h1v1H895zM897 342h1v1H897zM899 342h1v1H899zM901 342h1v1H901zM903 342h1v1H903zM905 342h1v1H905zM907 342h1v1H907zM909 342h1v1H909zM911 342h1v1H911zM913 342h1v1H913zM915 342h1v1H915zM917 342h1v1H917zM919 342h1v1H919zM921 342h1v1H921zM923 342h1v1H923zM925 342h1v1H925zM927 342h1v1H927zM929 342h1v1H929zM931 342h1v1H931zM933 342h1v1H933zM935 342h1v1H935zM937 342h1v1H937zM939 342h1v1H939zM941 342h1v1H941zM943 342h1v1H943zM945 342h1v1H945zM947 342h1v1H947zM949 342h1v1H949zM951 342h1v1H951zM953 342h1v1H953zM955 342h1v1H955zM957 342h1v1H957zM959 342h1v1H959zM961 342h1v1H961zM963 342h1v1H963zM965 342h1v1H965zM967 342h1v1H967zM969 342h1v1H969zM971 342h1v1H971zM973 342h1v1H973zM975 342h1v1H975zM977 342h1v1H977zM979 342h1v1H979zM981 342h1v1H981zM983 342h1v1H983zM985 342h1v1H985zM987 342h1v1H987zM989 342h1v1H989zM991 342h1v1H991zM993 342h1v1H993zM995 342h1v1H995zM997 342h1v1H997zM999 342h1v1H999zM1001 342h1v1H1001zM1003 342h1v1H1003zM1005 342h1v1H1005zM1007 342h1v1H1007zM1009 342h1v1H1009zM1011 342h1v1H1011zM1013 342h1v1H1013zM1015 342h1v1H1015zM1017 342h1v1H1017zM1019 342h1v1H1019zM41 343h1v1H41zM61 343h1v1H61zM81 343h1v1H81zM101 343h1v1H101zM141 343h1v1H141zM161 343h1v1H161zM181 343h1v1H181zM201 343h1v1H201zM241 343h1v1H241zM261 343h1v1H261zM281 343h1v1H281zM301 343h1v1H301zM341 343h1v1H341zM361 343h1v1H361zM381 343h1v1H381zM401 343h1v1H401zM441 343h1v1H441zM461 343h1v1H461zM481 343h1v1H481zM501 343h1v1H501zM541 343h1v1H541zM561 343h1v1H561zM581 343h1v1H581zM601 343h1v1H601zM641 343h1v1H641zM661 343h1v1H661zM681 343h1v1H681zM701 343h1v1H701zM741 343h1v1H741zM761 343h1v1H761zM781 343h1v1H781zM801 343h1v1H801zM841 343h1v1H841zM861 343h1v1H861zM881 343h1v1H881zM901 343h1v1H901zM941 343h1v1H941zM961 343h1v1H961zM981 343h1v1H981zM1001 343h1v1H1001zM121 344h1v1H121zM221 344h1v1H221zM321 344h1v1H321zM421 344h1v1H421zM521 344h1v1H521zM621 344h1v1H621zM721 344h1v1H721zM821 344h1v1H821zM921 344h1v1H921zM41 345h1v1H41zM61 345h1v1H61zM81 345h1v1H81zM101 345h1v1H101zM141 345h1v1H141zM161 345h1v1H161zM181 345h1v1H181zM201 345h1v1H201zM241 345h1v1H241zM261 345h1v1H261zM281 345h1v1H281zM301 345h1v1H301zM341 345h1v1H341zM361 345h1v1H361zM381 345h1v1H381zM401 345h1v1H401zM441 345h1v1H441zM461 345h1v1H461zM481 345h1v1H481zM501 345h1v1H501zM541 345h1v1H541zM561 345h1v1H561zM581 345h1v1H581zM601 345h1v1H601zM641 345h1v1H641zM661 345h1v1H661zM681 345h1v1H681zM701 345h1v1H701zM741 345h1v1H741zM761 345h1v1H761zM781 345h1v1H781zM801 345h1v1H801zM841 345h1v1H841zM861 345h1v1H861zM881 345h1v1H881zM901 345h1v1H901zM941 345h1v1H941zM961 345h1v1H961zM981 345h1v1H981zM1001 345h1v1H1001zM121 346h1v1H121zM221 346h1v1H221zM321 346h1v1H321zM421 346h1v1H421zM521 346h1v1H521zM621 346h1v1H621zM721 346h1v1H721zM821 346h1v1H821zM921 346h1v1H921zM121 348h1v1H121zM221 348h1v1H221zM321 348h1v1H321zM421 348h1v1H421zM521 348h1v1H521zM621 348h1v1H621zM721 348h1v1H721zM821 348h1v1H821zM921 348h1v1H921zM521 350h1v1H521zM521 352h1v1H521zM521 354h1v1H521zM21 355h1v1H21zM23 355h1v1H23zM121 355h1v1H121zM221 355h1v1H221zM321 355h1v1H321zM421 355h1v1H421zM518 355h1v1H518zM520 355h3v1H520zM524 355h1v1H524zM621 355h1v1H621zM721 355h1v1H721zM821 355h1v1H821zM921 355h1v1H921zM1018 355h1v1H1018zM1020 355h1v1H1020zM521 356h1v1H521zM521 358h1v1H521zM521 360h1v1H521zM521 362h1v1H521zM521 364h1v1H521zM521 366h1v1H521zM21 368h1v1H21zM23 368h1v1H23zM121 368h1v1H121zM221 368h1v1H221zM321 368h1v1H321zM421 368h1v1H421zM518 368h1v1H518zM520 368h3v1H520zM524 368h1v1H524zM621 368h1v1H621zM721 368h1v1H721zM821 368h1v1H821zM921 368h1v1H921zM1018 368h1v1H1018zM1020 368h1v1H1020zM521 370h1v1H521zM521 372h1v1H521zM521 374h1v1H521zM521 376h1v1H521zM521 378h1v1H521zM521 380h1v1H521zM21 381h1v1H21zM23 381h1v1H23zM121 381h1v1H121zM221 381h1v1H221zM321 381h1v1H321zM421 381h1v1H421zM518 381h1v1H518zM520 381h3v1H520zM524 381h1v1H524zM621 381h1v1H621zM721 381h1v1H721zM821 381h1v1H821zM921 381h1v1H921zM1018 381h1v1H1018zM1020 381h1v1H1020zM521 382h1v1H521zM521 384h1v1H521zM521 386h1v1H521zM521 388h1v1H521zM521 390h1v1H521zM521 392h1v1H521zM21 394h1v1H21zM23 394h1v1H23zM121 394h1v1H121zM221 394h1v1H221zM321 394h1v1H321zM421 394h1v1H421zM518 394h1v1H518zM520 394h3v1H520zM524 394h1v1H524zM621 394h1v1H621zM721 394h1v1H721zM821 394h1v1H821zM921 394h1v1H921zM1018 394h1v1H1018zM1020 394h1v1H1020zM521 396h1v1H521zM521 398h1v1H521zM521 400h1v1H521zM521 402h1v1H521zM521 404h1v1H521zM521 406h1v1H521zM21 407h2v1H21zM24 407h1v1H24zM26 407h1v1H26zM41 407h1v1H41zM61 407h1v1H61zM81 407h1v1H81zM101 407h1v1H101zM121 407h1v1H121zM141 407h1v1H141zM161 407h1v1H161zM181 407h1v1H181zM201 407h1v1H201zM221 407h1v1H221zM241 407h1v1H241zM261 407h1v1H261zM281 407h1v1H281zM301 407h1v1H301zM321 407h1v1H321zM341 407h1v1H341zM361 407h1v1H361zM381 407h1v1H381zM401 407h1v1H401zM421 407h1v1H421zM441 407h1v1H441zM461 407h1v1H461zM481 407h1v1H481zM501 407h1v1H501zM515 407h1v1H515zM517 407h1v1H517zM519 407h1v1H519zM521 407h1v1H521zM523 407h1v1H523zM525 407h1v1H525zM527 407h1v1H527zM541 407h1v1H541zM561 407h1v1H561zM581 407h1v1H581zM601 407h1v1H601zM621 407h1v1H621zM641 407h1v1H641zM661 407h1v1H661zM681 407h1v1H681zM701 407h1v1H701zM721 407h1v1H721zM741 407h1v1H741zM761 407h1v1H761zM781 407h1v1H781zM801 407h1v1H801zM821 407h1v1H821zM841 407h1v1H841zM861 407h1v1H861zM881 407h1v1H881zM901 407h1v1H901zM921 407h1v1H921zM941 407h1v1H941zM961 407h1v1H961zM981 407h1v1H981zM1001 407h1v1H1001zM1015 407h1v1H1015zM1017 407h1v1H1017zM1019 407h1v1H1019zM1021 407h1v1H1021zM521 408h1v1H521zM521 410h1v1H521zM521 412h1v1H521zM521 414h1v1H521zM521 416h1v1H521zM521 418h1v1H521zM21 420h1v1H21zM23 420h1v1H23zM121 420h1v1H121zM221 420h1v1H221zM321 420h1v1H321zM421 420h1v1H421zM518 420h1v1H518zM520 420h3v1H520zM524 420h1v1H524zM621 420h1v1H621zM721 420h1v1H721zM821 420h1v1H821zM921 420h1v1H921zM1018 420h1v1H1018zM1020 420h1v1H1020zM521 422h1v1H521zM521 424h1v1H521zM521 426h1v1H521zM521 428h1v1H521zM521 430h1v1H521zM521 432h1v1H521zM21 433h1v1H21zM23 433h1v1H23zM121 433h1v1H121zM221 433h1v1H221zM321 433h1v1H321zM421 433h1v1H421zM518 433h1v1H518zM520 433h3v1H520zM524 433h1v1H524zM621 433h1v1H621zM721 433h1v1H721zM821 433h1v1H821zM921 433h1v1H921zM1018 433h1v1H1018zM1020 433h1v1H1020zM521 434h1v1H521zM521 436h1v1H521zM521 438h1v1H521zM521 440h1v1H521zM521 442h1v1H521zM521 444h1v1H521zM21 446h1v1H21zM23 446h1v1H23zM121 446h1v1H121zM221 446h1v1H221zM321 446h1v1H321zM421 446h1v1H421zM518 446h1v1H518zM520 446h3v1H520zM524 446h1v1H524zM621 446h1v1H621zM721 446h1v1H721zM821 446h1v1H821zM921 446h1v1H921zM1018 446h1v1H1018zM1020 446h1v1H1020zM521 448h1v1H521zM521 450h1v1H521zM521 452h1v1H521zM521 454h1v1H521zM521 456h1v1H521zM521 458h1v1H521zM21 459h1v1H21zM23 459h1v1H23zM121 459h1v1H121zM221 459h1v1H221zM321 459h1v1H321zM421 459h1v1H421zM518 459h1v1H518zM520 459h3v1H520zM524 459h1v1H524zM621 459h1v1H621zM721 459h1v1H721zM821 459h1v1H821zM921 459h1v1H921zM1018 459h1v1H1018zM1020 459h1v1H1020zM521 460h1v1H521zM521 462h1v1H521zM521 464h1v1H521zM521 466h1v1H521zM521 468h1v1H521zM521 470h1v1H521zM21 472h2v1H21zM24 472h1v1H24zM26 472h1v1H26zM41 472h1v1H41zM61 472h1v1H61zM81 472h1v1H81zM101 472h1v1H101zM121 472h1v1H121zM141 472h1v1H141zM161 472h1v1H161zM181 472h1v1H181zM201 472h1v1H201zM221 472h1v1H221zM241 472h1v1H241zM261 472h1v1H261zM281 472h1v1H281zM301 472h1v1H301zM321 472h1v1H321zM341 472h1v1H341zM361 472h1v1H361zM381 472h1v1H381zM401 472h1v1H401zM421 472h1v1H421zM441 472h1v1H441zM461 472h1v1H461zM481 472h1v1H481zM501 472h1v1H501zM515 472h1v1H515zM517 472h1v1H517zM519 472h1v1H519zM521 472h1v1H521zM523 472h1v1H523zM525 472h1v1H525zM527 472h1v1H527zM541 472h1v1H541zM561 472h1v1H561zM581 472h1v1H581zM601 472h1v1H601zM621 472h1v1H621zM641 472h1v1H641zM661 472h1v1H661zM681 472h1v1H681zM701 472h1v1H701zM721 472h1v1H721zM741 472h1v1H741zM761 472h1v1H761zM781 472h1v1H781zM801 472h1v1H801zM821 472h1v1H821zM841 472h1v1H841zM861 472h1v1H861zM881 472h1v1H881zM901 472h1v1H901zM921 472h1v1H921zM941 472h1v1H941zM961 472h1v1H961zM981 472h1v1H981zM1001 472h1v1H1001zM1015 472h1v1H1015zM1017 472h1v1H1017zM1019 472h1v1H1019zM1021 472h1v1H1021zM521 474h1v1H521zM521 476h1v1H521zM521 478h1v1H521zM521 480h1v1H521zM521 482h1v1H521zM521 484h1v1H521zM21 485h1v1H21zM23 485h1v1H23zM121 485h1v1H121zM221 485h1v1H221zM321 485h1v1H321zM421 485h1v1H421zM518 485h1v1H518zM520 485h3v1H520zM524 485h1v1H524zM621 485h1v1H621zM721 485h1v1H721zM821 485h1v1H821zM921 485h1v1H921zM1018 485h1v1H1018zM1020 485h1v1H1020zM521 486h1v1H521zM521 488h1v1H521zM521 490h1v1H521zM521 492h1v1H521zM521 494h1v1H521zM521 496h1v1H521zM21 498h1v1H21zM23 498h1v1H23zM121 498h1v1H121zM221 498h1v1H221zM321 498h1v1H321zM421 498h1v1H421zM518 498h1v1H518zM520 498h3v1H520zM524 498h1v1H524zM621 498h1v1H621zM721 498h1v1H721zM821 498h1v1H821zM921 498h1v1H921zM1018 498h1v1H1018zM1020 498h1v1H1020zM521 500h1v1H521zM521 502h1v1H521zM521 504h1v1H521zM521 506h1v1H521zM521 508h1v1H521zM521 510h1v1H521zM21 511h1v1H21zM23 511h1v1H23zM121 511h1v1H121zM221 511h1v1H221zM321 511h1v1H321zM421 511h1v1H421zM518 511h1v1H518zM520 511h3v1H520zM524 511h1v1H524zM621 511h1v1H621zM721 511h1v1H721zM821 511h1v1H821zM921 511h1v1H921zM1018 511h1v1H1018zM1020 511h1v1H1020zM521 512h1v1H521zM521 514h1v1H521zM521 516h1v1H521zM521 518h1v1H521zM521 520h1v1H521zM521 522h1v1H521zM21 524h1v1H21zM23 524h1v1H23zM121 524h1v1H121zM221 524h1v1H221zM321 524h1v1H321zM421 524h1v1H421zM518 524h1v1H518zM520 524h3v1H520zM524 524h1v1H524zM621 524h1v1H621zM721 524h1v1H721zM821 524h1v1H821zM921 524h1v1H921zM1018 524h1v1H1018zM1020 524h1v1H1020zM521 526h1v1H521zM521 528h1v1H521zM521 530h1v1H521zM521 532h1v1H521zM521 534h1v1H521zM521 536h1v1H521zM21 537h2v1H21zM24 537h1v1H24zM26 537h1v1H26zM41 537h1v1H41zM61 537h1v1H61zM81 537h1v1H81zM101 537h1v1H101zM121 537h1v1H121zM141 537h1v1H141zM161 537h1v1H161zM181 537h1v1H181zM201 537h1v1H201zM221 537h1v1H221zM241 537h1v1H241zM261 537h1v1H261zM281 537h1v1H281zM301 537h1v1H301zM321 537h1v1H321zM341 537h1v1H341zM361 537h1v1H361zM381 537h1v1H381zM401 537h1v1H401zM421 537h1v1H421zM441 537h1v1H441zM461 537h1v1H461zM481 537h1v1H481zM501 537h1v1H501zM515 537h1v1H515zM517 537h1v1H517zM519 537h1v1H519zM521 537h1v1H521zM523 537h1v1H523zM525 537h1v1H525zM527 537h1v1H527zM541 537h1v1H541zM561 537h1v1H561zM581 537h1v1H581zM601 537h1v1H601zM621 537h1v1H621zM641 537h1v1H641zM661 537h1v1H661zM681 537h1v1H681zM701 537h1v1H701zM721 537h1v1H721zM741 537h1v1H741zM761 537h1v1H761zM781 537h1v1H781zM801 537h1v1H801zM821 537h1v1H821zM841 537h1v1H841zM861 537h1v1H861zM881 537h1v1H881zM901 537h1v1H901zM921 537h1v1H921zM941 537h1v1H941zM961 537h1v1H961zM981 537h1v1H981zM1001 537h1v1H1001zM1015 537h1v1H1015zM1017 537h1v1H1017zM1019 537h1v1H1019zM1021 537h1v1H1021zM521 538h1v1H521zM521 540h1v1H521zM521 542h1v1H521zM521 544h1v1H521zM521 546h1v1H521zM521 548h1v1H521zM21 550h1v1H21zM23 550h1v1H23zM121 550h1v1H121zM221 550h1v1H221zM321 550h1v1H321zM421 550h1v1H421zM518 550h1v1H518zM520 550h3v1H520zM524 550h1v1H524zM621 550h1v1H621zM721 550h1v1H721zM821 550h1v1H821zM921 550h1v1H921zM1018 550h1v1H1018zM1020 550h1v1H1020zM521 552h1v1H521zM521 554h1v1H521zM521 556h1v1H521zM521 558h1v1H521zM521 560h1v1H521zM521 562h1v1H521zM21 563h1v1H21zM23 563h1v1H23zM121 563h1v1H121zM221 563h1v1H221zM321 563h1v1H321zM421 563h1v1H421zM518 563h1v1H518zM520 563h3v1H520zM524 563h1v1H524zM621 563h1v1H621zM721 563h1v1H721zM821 563h1v1H821zM921 563h1v1H921zM1018 563h1v1H1018zM1020 563h1v1H1020zM521 564h1v1H521zM521 566h1v1H521zM521 568h1v1H521zM521 570h1v1H521zM521 572h1v1H521zM521 574h1v1H521zM21 576h1v1H21zM23 576h1v1H23zM121 576h1v1H121zM221 576h1v1H221zM321 576h1v1H321zM421 576h1v1H421zM518 576h1v1H518zM520 576h3v1H520zM524 576h1v1H524zM621 576h1v1H621zM721 576h1v1H721zM821 576h1v1H821zM921 576h1v1H921zM1018 576h1v1H1018zM1020 576h1v1H1020zM521 578h1v1H521zM521 580h1v1H521zM521 582h1v1H521zM521 584h1v1H521zM521 586h1v1H521zM521 588h1v1H521zM21 589h1v1H21zM23 589h1v1H23zM121 589h1v1H121zM221 589h1v1H221zM321 589h1v1H321zM421 589h1v1H421zM518 589h1v1H518zM520 589h3v1H520zM524 589h1v1H524zM621 589h1v1H621zM721 589h1v1H721zM821 589h1v1H821zM921 589h1v1H921zM1018 589h1v1H1018zM1020 589h1v1H1020zM521 590h1v1H521zM521 592h1v1H521zM521 594h1v1H521zM521 596h1v1H521zM521 598h1v1H521zM521 600h1v1H521zM21 602h2v1H21zM24 602h1v1H24zM26 602h1v1H26zM41 602h1v1H41zM61 602h1v1H61zM81 602h1v1H81zM101 602h1v1H101zM121 602h1v1H121zM141 602h1v1H141zM161 602h1v1H161zM181 602h1v1H181zM201 602h1v1H201zM221 602h1v1H221zM241 602h1v1H241zM261 602h1v1H261zM281 602h1v1H281zM301 602h1v1H301zM321 602h1v1H321zM341 602h1v1H341zM361 602h1v1H361zM381 602h1v1H381zM401 602h1v1H401zM421 602h1v1H421zM441 602h1v1H441zM461 602h1v1H461zM481 602h1v1H481zM501 602h1v1H501zM515 602h1v1H515zM517 602h1v1H517zM519 602h1v1H519zM521 602h1v1H521zM523 602h1v1H523zM525 602h1v1H525zM527 602h1v1H527zM541 602h1v1H541zM561 602h1v1H561zM581 602h1v1H581zM601 602h1v1H601zM621 602h1v1H621zM641 602h1v1H641zM661 602h1v1H661zM681 602h1v1H681zM701 602h1v1H701zM721 602h1v1H721zM741 602h1v1H741zM761 602h1v1H761zM781 602h1v1H781zM801 602h1v1H801zM821 602h1v1H821zM841 602h1v1H841zM861 602h1v1H861zM881 602h1v1H881zM901 602h1v1H901zM921 602h1v1H921zM941 602h1v1H941zM961 602h1v1H961zM981 602h1v1H981zM1001 602h1v1H1001zM1015 602h1v1H1015zM1017 602h1v1H1017zM1019 602h1v1H1019zM1021 602h1v1H1021zM521 604h1v1H521zM521 606h1v1H521zM521 608h1v1H521zM521 610h1v1H521zM521 612h1v1H521zM521 614h1v1H521zM21 615h1v1H21zM23 615h1v1H23zM121 615h1v1H121zM221 615h1v1H221zM321 615h1v1H321zM421 615h1v1H421zM518 615h1v1H518zM520 615h3v1H520zM524 615h1v1H524zM621 615h1v1H621zM721 615h1v1H721zM821 615h1v1H821zM921 615h1v1H921zM1018 615h1v1H1018zM1020 615h1v1H1020zM521 616h1v1H521zM521 618h1v1H521zM521 620h1v1H521zM521 622h1v1H521zM521 624h1v1H521zM521 626h1v1H521zM21 628h1v1H21zM23 628h1v1H23zM121 628h1v1H121zM221 628h1v1H221zM321 628h1v1H321zM421 628h1v1H421zM518 628h1v1H518zM520 628h3v1H520zM524 628h1v1H524zM621 628h1v1H621zM721 628h1v1H721zM821 628h1v1H821zM921 628h1v1H921zM1018 628h1v1H1018zM1020 628h1v1H1020zM521 630h1v1H521zM521 632h1v1H521zM521 634h1v1H521zM521 636h1v1H521zM521 638h1v1H521zM521 640h1v1H521zM21 641h1v1H21zM23 641h1v1H23zM121 641h1v1H121zM221 641h1v1H221zM321 641h1v1H321zM421 641h1v1H421zM518 641h1v1H518zM520 641h3v1H520zM524 641h1v1H524zM621 641h1v1H621zM721 641h1v1H721zM821 641h1v1H821zM921 641h1v1H921zM1018 641h1v1H1018zM1020 641h1v1H1020zM521 642h1v1H521zM521 644h1v1H521zM521 646h1v1H521zM521 648h1v1H521zM521 650h1v1H521zM521 652h1v1H521zM21 654h1v1H21zM23 654h1v1H23zM121 654h1v1H121zM221 654h1v1H221zM321 654h1v1H321zM421 654h1v1H421zM518 654h1v1H518zM520 654h3v1H520zM524 654h1v1H524zM621 654h1v1H621zM721 654h1v1H721zM821 654h1v1H821zM921 654h1v1H921zM1018 654h1v1H1018zM1020 654h1v1H1020zM521 656h1v1H521zM521 658h1v1H521zM521 660h1v1H521zM121 662h1v1H121zM221 662h1v1H221zM321 662h1v1H321zM421 662h1v1H421zM521 662h1v1H521zM621 662h1v1H621zM721 662h1v1H721zM821 662h1v1H821zM921 662h1v1H921zM121 664h1v1H121zM221 664h1v1H221zM321 664h1v1H321zM421 664h1v1H421zM521 664h1v1H521zM621 664h1v1H621zM721 664h1v1H721zM821 664h1v1H821zM921 664h1v1H921zM41 665h1v1H41zM61 665h1v1H61zM81 665h1v1H81zM101 665h1v1H101zM141 665h1v1H141zM161 665h1v1H161zM181 665h1v1H181zM201 665h1v1H201zM241 665h1v1H241zM261 665h1v1H261zM281 665h1v1H281zM301 665h1v1H301zM341 665h1v1H341zM361 665h1v1H361zM381 665h1v1H381zM401 665h1v1H401zM441 665h1v1H441zM461 665h1v1H461zM481 665h1v1H481zM501 665h1v1H501zM541 665h1v1H541zM561 665h1v1H561zM581 665h1v1H581zM601 665h1v1H601zM641 665h1v1H641zM661 665h1v1H661zM681 665h1v1H681zM701 665h1v1H701zM741 665h1v1H741zM761 665h1v1H761zM781 665h1v1H781zM801 665h1v1H801zM841 665h1v1H841zM861 665h1v1H861zM881 665h1v1H881zM901 665h1v1H901zM941 665h1v1H941zM961 665h1v1H961zM981 665h1v1H981zM1001 665h1v1H1001zM121 666h1v1H121zM221 666h1v1H221zM321 666h1v1H321zM421 666h1v1H421zM521 666h1v1H521zM621 666h1v1H621zM721 666h1v1H721zM821 666h1v1H821zM921 666h1v1H921zM41 667h1v1H41zM61 667h1v1H61zM81 667h1v1H81zM101 667h1v1H101zM121 667h1v1H121zM141 667h1v1H141zM161 667h1v1H161zM181 667h1v1H181zM201 667h1v1H201zM221 667h1v1H221zM241 667h1v1H241zM261 667h1v1H261zM281 667h1v1H281zM301 667h1v1H301zM321 667h1v1H321zM341 667h1v1H341zM361 667h1v1H361zM381 667h1v1H381zM401 667h1v1H401zM421 667h1v1H421zM441 667h1v1H441zM461 667h1v1H461zM481 667h1v1H481zM501 667h1v1H501zM541 667h1v1H541zM561 667h1v1H561zM581 667h1v1H581zM601 667h1v1H601zM621 667h1v1H621zM641 667h1v1H641zM661 667h1v1H661zM681 667h1v1H681zM701 667h1v1H701zM721 667h1v1H721zM741 667h1v1H741zM761 667h1v1H761zM781 667h1v1H781zM801 667h1v1H801zM821 667h1v1H821zM841 667h1v1H841zM861 667h1v1H861zM881 667h1v1H881zM901 667h1v1H901zM921 667h1v1H921zM941 667h1v1H941zM961 667h1v1H961zM981 667h1v1H981zM1001 667h1v1H1001z"/>
<rect x="20" y="16" width="1002" height="1" fill="#5090d0"/>
<rect x="20" y="668" width="1002" height="1" fill="#5090d0"/>
<rect x="20" y="16" width="1" height="653" fill="#5090d0"/>
<rect x="1021" y="16" width="1" height="653" fill="#5090d0"/>
<text x="0" y="15" font-size="21" fill="#f0f0ff" text-anchor="start" font-weight="normal" font-family='"Liberation Serif", serif' textLength="31.5" lengthAdjust="spacing" stroke="#f0f0ff" stroke-width="0.35">Tek</text>
<text x="35.5" y="13" font-size="15.5" fill="#f0f0ff" text-anchor="start" font-weight="normal" font-family='"Liberation Sans", sans-serif' textLength="29.5" lengthAdjust="spacing" stroke="#f0f0ff" stroke-width="0.25">Run</text>
<text x="925" y="13" font-size="15" fill="#f0f0ff" text-anchor="start" font-weight="normal" font-family='"Liberation Sans", sans-serif' textLength="39" lengthAdjust="spacing">Trig?</text>
<rect x="121" y="0" width="800" height="1" fill="#5090d0"/>
<rect x="121" y="0" width="1" height="16" fill="#5090d0"/>
<rect x="920" y="0" width="1" height="16" fill="#5090d0"/>
<rect x="121" y="15" width="800" height="1" fill="#5090d0"/>
<rect x="282" y="7" width="479" height="1" fill="#00d8d0"/>
<rect x="508" y="1" width="2" height="14" fill="#ffffff"/>
<rect x="508" y="1" width="3" height="2" fill="#ffffff"/>
<rect x="508" y="13" width="3" height="2" fill="#ffffff"/>
<rect x="533" y="1" width="2" height="14" fill="#ffffff"/>
<rect x="532" y="1" width="3" height="2" fill="#ffffff"/>
<rect x="532" y="13" width="3" height="2" fill="#ffffff"/>
<path fill="#ffa000" d="M518 1H525L521.5 5Z"/>
<path fill="#ffa000" d="M518 5H525L526 6V15L525 16H518L517 15V6Z"/>
<rect x="519" y="6" width="5" height="2" fill="#000"/>
<rect x="520" y="8" width="2" height="7" fill="#000"/>
<path fill="#ffa000" d="M516 17H527L521.5 23Z"/>
<path fill="#ffa000" d="M499 24H509L510 25V35L504.5 39L498 35V25Z"/>
<rect x="499" y="25" width="10" height="2" fill="#000"/>
<rect x="503" y="27" width="2" height="9" fill="#000"/>
<path fill="#ff00ff" fill-rule="evenodd" d="M1 131.5H12L20 139.5L12 147.5H1L0 146.5V132.5ZM2 133.5H11L17 139.5L11 145.5H2Z"/>
<text x="3.5" y="145.5" font-size="16" fill="#e838e8" text-anchor="start" font-weight="normal" font-family='"Liberation Sans", sans-serif'>3</text>
<path fill="#00e8e8" d="M1 247H12L20 255L12 263H1L0 262V248Z"/>
<text x="3.5" y="261" font-size="16" fill="#000" text-anchor="start" font-weight="bold" font-family='"Liberation Sans", sans-serif'>2</text>
<path fill="#00ff00" fill-rule="evenodd" d="M1 334H12L20 342L12 350H1L0 349V335ZM2 336H11L17 342L11 348H2Z"/>
<text x="3.5" y="348" font-size="16" fill="#00ff00" text-anchor="start" font-weight="normal" font-family='"Liberation Sans", sans-serif'>4</text>
<path fill="#ffff00" fill-rule="evenodd" d="M1 625H12L20 633L12 641H1L0 640V626ZM2 627H11L17 633L11 639H2Z"/>
<text x="3.5" y="639" font-size="16" fill="#ffff00" text-anchor="start" font-weight="bold" font-family='"Liberation Sans", sans-serif'>1</text>
<rect x="20.5" y="670.5" width="555" height="20" rx="6" fill="none" stroke="#e0e0e0" shape-rendering="geometricPrecision"/>
<rect x="26" y="673" width="25" height="16" rx="8" ry="8" fill="#ffff00" shape-rendering="geometricPrecision"/><text x="38.5" y="686" font-size="14" fill="#000" text-anchor="middle" font-weight="bold" font-family='"Liberation Sans", sans-serif'>1</text>
<text x="68" y="686" font-size="16" fill="#f0f000" text-anchor="start" font-weight="normal" font-family='"Liberation Sans", sans-serif' textLength="50" lengthAdjust="spacing">5.00 V</text>
<text x="144" y="682" font-size="7.5" fill="#f0f000" text-anchor="start" font-weight="normal" font-family='"Liberation Sans", sans-serif' textLength="4.5" lengthAdjust="spacing">B</text><text x="148" y="686.5" font-size="7.5" fill="#f0f000" text-anchor="start" font-weight="normal" font-family='"Liberation Sans", sans-serif' textLength="6" lengthAdjust="spacing">W</text>
<rect x="165" y="673" width="25" height="16" rx="8" ry="8" fill="#00e0e8" shape-rendering="geometricPrecision"/><text x="177.5" y="686" font-size="14" fill="#000" text-anchor="middle" font-weight="bold" font-family='"Liberation Sans", sans-serif'>2</text>
<text x="207" y="686" font-size="16" fill="#00e0f0" text-anchor="start" font-weight="normal" font-family='"Liberation Sans", sans-serif' textLength="62.5" lengthAdjust="spacing">20.0mV</text>
<text x="269" y="686" font-size="15" fill="#00e0f0" text-anchor="start" font-weight="normal" font-family='"Liberation Sans", sans-serif' textLength="12.5" lengthAdjust="spacing">Ω</text>
<text x="283" y="682" font-size="7.5" fill="#00e0f0" text-anchor="start" font-weight="normal" font-family='"Liberation Sans", sans-serif' textLength="4.5" lengthAdjust="spacing">B</text><text x="287" y="686.5" font-size="7.5" fill="#00e0f0" text-anchor="start" font-weight="normal" font-family='"Liberation Sans", sans-serif' textLength="6" lengthAdjust="spacing">W</text>
<rect x="304" y="673" width="25" height="16" rx="8" ry="8" fill="#a000a8" shape-rendering="geometricPrecision"/><text x="316.5" y="686" font-size="14" fill="#000" text-anchor="middle" font-weight="bold" font-family='"Liberation Sans", sans-serif'>3</text>
<text x="346.5" y="686" font-size="16" fill="#b000b8" text-anchor="start" font-weight="normal" font-family='"Liberation Sans", sans-serif' textLength="62.5" lengthAdjust="spacing">20.0mV</text>
<text x="408.5" y="686" font-size="15" fill="#b000b8" text-anchor="start" font-weight="normal" font-family='"Liberation Sans", sans-serif' textLength="12.5" lengthAdjust="spacing">Ω</text>
<text x="422" y="682" font-size="7.5" fill="#b000b8" text-anchor="start" font-weight="normal" font-family='"Liberation Sans", sans-serif' textLength="4.5" lengthAdjust="spacing">B</text><text x="426" y="686.5" font-size="7.5" fill="#b000b8" text-anchor="start" font-weight="normal" font-family='"Liberation Sans", sans-serif' textLength="6" lengthAdjust="spacing">W</text>
<rect x="443" y="673" width="25" height="16" rx="8" ry="8" fill="#10a810" shape-rendering="geometricPrecision"/><text x="455.5" y="686" font-size="14" fill="#000" text-anchor="middle" font-weight="bold" font-family='"Liberation Sans", sans-serif'>4</text>
<text x="486" y="686" font-size="16" fill="#10b010" text-anchor="start" font-weight="normal" font-family='"Liberation Sans", sans-serif' textLength="48" lengthAdjust="spacing">10.0 V</text>
<text x="561" y="682" font-size="7.5" fill="#10b010" text-anchor="start" font-weight="normal" font-family='"Liberation Sans", sans-serif' textLength="4.5" lengthAdjust="spacing">B</text><text x="565" y="686.5" font-size="7.5" fill="#10b010" text-anchor="start" font-weight="normal" font-family='"Liberation Sans", sans-serif' textLength="6" lengthAdjust="spacing">W</text>
<rect x="582.5" y="670.5" width="147" height="37" rx="6" fill="none" stroke="#e0e0e0" shape-rendering="geometricPrecision"/>
<text x="589" y="686" font-size="16" fill="#f0f0ff" text-anchor="start" font-weight="normal" font-family='"Liberation Sans", sans-serif' textLength="53" lengthAdjust="spacing">2.00µs</text>
<rect x="587" y="692" width="12" height="12" fill="#ffa000" rx="1"/>
<rect x="589" y="694" width="8" height="2" fill="#000"/>
<rect x="592" y="694" width="2" height="8" fill="#000"/>
<path fill="#ffa000" d="M600 697H607V695L610 698L607 701V699H600Z"/>
<path fill="#ffa000" d="M610 693H621L615.5 699Z"/>
<text x="623" y="703" font-size="16" fill="#ffa000" text-anchor="start" font-weight="normal" font-family='"Liberation Sans", sans-serif' textLength="92" lengthAdjust="spacing">350.0000ns</text>
<rect x="737.5" y="670.5" width="106" height="37" rx="6" fill="none" stroke="#e0e0e0" shape-rendering="geometricPrecision"/>
<text x="744" y="686" font-size="16" fill="#f0f0ff" text-anchor="start" font-weight="normal" font-family='"Liberation Sans", sans-serif' textLength="70" lengthAdjust="spacing">2.50GS/s</text>
<text x="744" y="703" font-size="16" fill="#f0f0ff" text-anchor="start" font-weight="normal" font-family='"Liberation Sans", sans-serif' textLength="82" lengthAdjust="spacing">1M points</text>
<rect x="852.5" y="670.5" width="169" height="37" rx="6" fill="none" stroke="#e0e0e0" shape-rendering="geometricPrecision"/>
<rect x="882" y="673" width="25" height="16" rx="8" ry="8" fill="#ffff00" shape-rendering="geometricPrecision"/><text x="894.5" y="686" font-size="14" fill="#000" text-anchor="middle" font-weight="bold" font-family='"Liberation Sans", sans-serif'>1</text>
<path fill="none" stroke="#f0f0ff" stroke-width="2" d="M920 685H924L928 676H932"/>
<text x="965" y="686" font-size="16" fill="#f0f0ff" text-anchor="start" font-weight="normal" font-family='"Liberation Sans", sans-serif' textLength="51" lengthAdjust="spacing">3.80 V</text>
<path fill="#ffff00" d="M1009.5 584.5L1016 578.5V591Z" shape-rendering="geometricPrecision"/>
<rect x="1016" y="584" width="5" height="1" fill="#ffff00"/>
<path fill="#8a8a8a" d="M22.5 714H131.5L134 716.5V765.5L131.5 768H22.5L20 765.5V716.5Z" shape-rendering="geometricPrecision"/>
<path fill="#6c6c6c" d="M23 715H131L133 717V765L131 767H23L21 765V717Z" shape-rendering="geometricPrecision"/>
<path fill="#545654" d="M23.5 716H130.5L132 717.5V764.5L130.5 766H23.5L22 764.5V717.5Z" shape-rendering="geometricPrecision"/>
<text x="77" y="738" font-size="15" fill="#ececf6" text-anchor="middle" font-weight="normal" font-family='"Liberation Sans", sans-serif' textLength="36.5" lengthAdjust="spacing">Save</text>
<text x="77" y="755" font-size="15" fill="#ececf6" text-anchor="middle" font-weight="normal" font-family='"Liberation Sans", sans-serif' textLength="106.5" lengthAdjust="spacing">Screen Image</text>
<path fill="#8a8a8a" d="M140.5 714H249.5L252 716.5V765.5L249.5 768H140.5L138 765.5V716.5Z" shape-rendering="geometricPrecision"/>
<path fill="#6c6c6c" d="M141 715H249L251 717V765L249 767H141L139 765V717Z" shape-rendering="geometricPrecision"/>
<path fill="#545654" d="M141.5 716H248.5L250 717.5V764.5L248.5 766H141.5L140 764.5V717.5Z" shape-rendering="geometricPrecision"/>
<text x="195" y="738" font-size="15" fill="#ececf6" text-anchor="middle" font-weight="normal" font-family='"Liberation Sans", sans-serif' textLength="36.5" lengthAdjust="spacing">Save</text>
<text x="195" y="755" font-size="15" fill="#ececf6" text-anchor="middle" font-weight="normal" font-family='"Liberation Sans", sans-serif' textLength="81" lengthAdjust="spacing">Waveform</text>
<path fill="#8a8a8a" d="M258.5 714H367.5L370 716.5V765.5L367.5 768H258.5L256 765.5V716.5Z" shape-rendering="geometricPrecision"/>
<path fill="#6c6c6c" d="M259 715H367L369 717V765L367 767H259L257 765V717Z" shape-rendering="geometricPrecision"/>
<path fill="#545654" d="M259.5 716H366.5L368 717.5V764.5L366.5 766H259.5L258 764.5V717.5Z" shape-rendering="geometricPrecision"/>
<text x="313" y="738" font-size="15" fill="#ececf6" text-anchor="middle" font-weight="normal" font-family='"Liberation Sans", sans-serif' textLength="36.5" lengthAdjust="spacing">Save</text>
<text x="313" y="755" font-size="15" fill="#ececf6" text-anchor="middle" font-weight="normal" font-family='"Liberation Sans", sans-serif' textLength="48" lengthAdjust="spacing">Setup</text>
<path fill="#8a8a8a" d="M376.5 714H485.5L488 716.5V765.5L485.5 768H376.5L374 765.5V716.5Z" shape-rendering="geometricPrecision"/>
<path fill="#6c6c6c" d="M377 715H485L487 717V765L485 767H377L375 765V717Z" shape-rendering="geometricPrecision"/>
<path fill="#545654" d="M377.5 716H484.5L486 717.5V764.5L484.5 766H377.5L376 764.5V717.5Z" shape-rendering="geometricPrecision"/>
<text x="431" y="738" font-size="15" fill="#ececf6" text-anchor="middle" font-weight="normal" font-family='"Liberation Sans", sans-serif' textLength="45" lengthAdjust="spacing">Recall</text>
<text x="431" y="755" font-size="15" fill="#ececf6" text-anchor="middle" font-weight="normal" font-family='"Liberation Sans", sans-serif' textLength="81" lengthAdjust="spacing">Waveform</text>
<path fill="#8a8a8a" d="M494.5 714H603.5L606 716.5V765.5L603.5 768H494.5L492 765.5V716.5Z" shape-rendering="geometricPrecision"/>
<path fill="#6c6c6c" d="M495 715H603L605 717V765L603 767H495L493 765V717Z" shape-rendering="geometricPrecision"/>
<path fill="#545654" d="M495.5 716H602.5L604 717.5V764.5L602.5 766H495.5L494 764.5V717.5Z" shape-rendering="geometricPrecision"/>
<text x="549" y="738" font-size="15" fill="#ececf6" text-anchor="middle" font-weight="normal" font-family='"Liberation Sans", sans-serif' textLength="45" lengthAdjust="spacing">Recall</text>
<text x="549" y="755" font-size="15" fill="#ececf6" text-anchor="middle" font-weight="normal" font-family='"Liberation Sans", sans-serif' textLength="48" lengthAdjust="spacing">Setup</text>
<path fill="#8a8a8a" d="M612.5 714H721.5L724 716.5V765.5L721.5 768H612.5L610 765.5V716.5Z" shape-rendering="geometricPrecision"/>
<path fill="#6c6c6c" d="M613 715H721L723 717V765L721 767H613L611 765V717Z" shape-rendering="geometricPrecision"/>
<path fill="#545654" d="M613.5 716H720.5L722 717.5V764.5L720.5 766H613.5L612 764.5V717.5Z" shape-rendering="geometricPrecision"/>
<text x="667" y="729" font-size="15" fill="#ececf6" text-anchor="middle" font-weight="normal" font-family='"Liberation Sans", sans-serif' textLength="54" lengthAdjust="spacing">Assign</text>
<rect x="639" y="733" width="35" height="15" rx="7" fill="#e8e8e8" shape-rendering="geometricPrecision"/>
<text x="656.5" y="745" font-size="12" fill="#000" text-anchor="middle" font-weight="bold" font-family='"Liberation Sans", sans-serif'>Save</text>
<text x="680" y="746" font-size="15" fill="#ececf6" text-anchor="start" font-weight="normal" font-family='"Liberation Sans", sans-serif'>to</text>
<rect x="641" y="750" width="52" height="16" fill="#1070f0"/>
<text x="667" y="763" font-size="15" fill="#ececf6" text-anchor="middle" font-weight="normal" font-family='"Liberation Sans", sans-serif' textLength="47" lengthAdjust="spacing">Image</text>
<path fill="#8a8a8a" d="M730.5 714H839.5L842 716.5V765.5L839.5 768H730.5L728 765.5V716.5Z" shape-rendering="geometricPrecision"/>
<path fill="#6c6c6c" d="M731 715H839L841 717V765L839 767H731L729 765V717Z" shape-rendering="geometricPrecision"/>
<path fill="#545654" d="M731.5 716H838.5L840 717.5V764.5L838.5 766H731.5L730 764.5V717.5Z" shape-rendering="geometricPrecision"/>
<text x="785" y="738" font-size="15" fill="#ececf6" text-anchor="middle" font-weight="normal" font-family='"Liberation Sans", sans-serif' textLength="28.5" lengthAdjust="spacing">File</text>
<text x="785" y="755" font-size="15" fill="#ececf6" text-anchor="middle" font-weight="normal" font-family='"Liberation Sans", sans-serif' textLength="62.5" lengthAdjust="spacing">Utilities</text>
<rect x="909.5" y="729.5" width="112" height="37" rx="6" fill="none" stroke="#e0e0e0" shape-rendering="geometricPrecision"/>
<text x="925" y="746" font-size="15" fill="#f0f0ff" text-anchor="start" font-weight="normal" font-family='"Liberation Sans", sans-serif' textLength="91" lengthAdjust="spacing" xml:space="preserve">6 Sep  2023</text>
<text x="917" y="762" font-size="15" fill="#f0f0ff" text-anchor="start" font-weight="normal" font-family='"Liberation Sans", sans-serif' textLength="68" lengthAdjust="spacing">10:01:23</text>
</svg>
</body></html>
